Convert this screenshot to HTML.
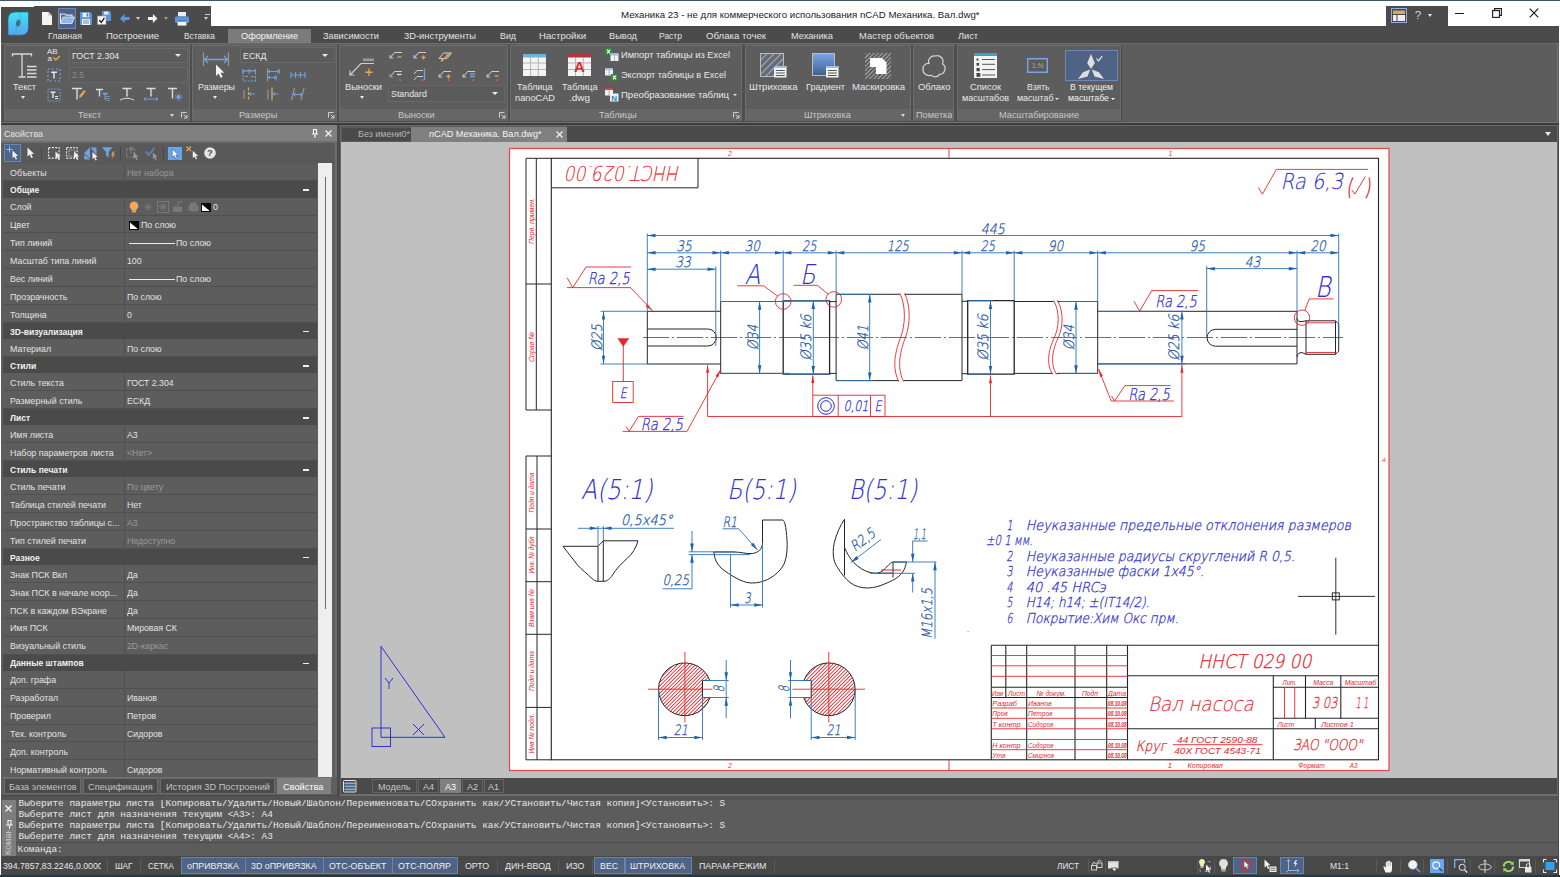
<!DOCTYPE html>
<html lang="ru"><head><meta charset="utf-8"><title>nanoCAD Механика</title>
<style>
html,body{margin:0;padding:0;background:#454545;}
body{width:1560px;height:877px;position:relative;overflow:hidden;font-family:"Liberation Sans",sans-serif;}
.b{position:absolute;box-sizing:border-box;}
.t{position:absolute;white-space:nowrap;transform-origin:0 50%;}
svg{overflow:visible;}
</style></head>
<body>
<div class="b" style="left:0px;top:0px;width:1560px;height:877px;background:#ffffff;"></div>
<div class="b" style="left:0px;top:0px;width:1560px;height:1px;background:#3d5868;"></div>
<div class="b" style="left:1px;top:26px;width:1558px;height:849px;background:#4b4b4b;"></div>
<div class="b" style="left:0px;top:875px;width:1560px;height:2px;background:#233a44;"></div>
<div class="b" style="left:1px;top:7px;width:34px;height:19px;background:#4b4b4b;"></div>
<div class="b" style="left:34px;top:6px;width:177px;height:20px;background:#4b4b4b;"></div>
<svg class="b" style="left:42px;top:12px" width="10" height="13" viewBox="0 0 10 13"><path d="M0 0H6.5L10 3.5V13H0Z" fill="#f4f4f4"/><path d="M6.5 0V3.5H10" fill="#bdbdbd"/></svg>
<div class="b" style="left:58px;top:8px;width:18px;height:20.5px;background:#4f6384;box-shadow:0 0 0 1px #6a89ba inset;"></div>
<svg class="b" style="left:60px;top:13px" width="15" height="11" viewBox="0 0 15 11"><path d="M0.5 10.5V1H5L6 2.2H12V4" fill="none" stroke="#dfe9f7" stroke-width="1.2"/><path d="M0.5 10.5L3 4H14.5L12 10.5Z" fill="#8fb7ea" stroke="#e8f0fb" stroke-width="0.8"/></svg>
<svg class="b" style="left:80px;top:12px" width="12" height="13" viewBox="0 0 12 13"><path d="M0 0H10L12 2V13H0Z" fill="#5c97dc"/><rect x="2.5" y="0.8" width="6.5" height="4.4" fill="#eaf1fb"/><rect x="6.6" y="1.4" width="1.6" height="3.2" fill="#4a7cc0"/><rect x="2" y="7.2" width="8" height="5.8" fill="#f2f2f2"/><path d="M3 9H9M3 11H9" stroke="#6b6b6b" stroke-width="0.8"/></svg>
<svg class="b" style="left:97px;top:11px" width="14" height="14" viewBox="0 0 14 14"><path d="M5 0H12.5L14 1.5V10H5Z" fill="#5c97dc"/><rect x="7" y="0.6" width="4.5" height="3" fill="#dfeaf8"/><rect x="0.5" y="5" width="8.5" height="8.5" fill="#f6f6f6" stroke="#9a9a9a" stroke-width="0.6"/><path d="M2.3 9.2L4.3 11.3L7.4 6.8" fill="none" stroke="#222" stroke-width="1.4"/></svg>
<svg class="b" style="left:120px;top:14px" width="10" height="9" viewBox="0 0 10 9"><path d="M0 4.5L4.6 0V2.9H9.5V6.1H4.6V9Z" fill="#5c97dc"/></svg>
<div class="b" style="left:135.9px;top:17.2px;border:2.6px solid transparent;border-top:3.1px solid #cfcfcf;border-bottom:0"></div>
<svg class="b" style="left:148px;top:14px" width="10" height="9" viewBox="0 0 10 9"><path d="M9.5 4.5L4.9 0V2.9H0V6.1H4.9V9Z" fill="#f4f4f4"/></svg>
<div class="b" style="left:163.9px;top:17.2px;border:2.6px solid transparent;border-top:3.1px solid #9a9a9a;border-bottom:0"></div>
<svg class="b" style="left:174.5px;top:11.5px" width="14" height="14" viewBox="0 0 14 14"><rect x="3" y="0" width="8" height="4.5" fill="#e8eef6"/><rect x="0" y="4.5" width="14" height="6.2" rx="1" fill="#5c97dc"/><rect x="2.6" y="9" width="8.8" height="4.6" fill="#f4f4f4"/><rect x="2.6" y="8.6" width="8.8" height="1" fill="#335f99"/></svg>
<div class="b" style="left:204.5px;top:13.5px;width:5px;height:1px;background:#cfcfcf;"></div>
<div class="b" style="left:204.4px;top:16.7px;border:2.6px solid transparent;border-top:3.1px solid #cfcfcf;border-bottom:0"></div>
<div class="t" style="left:621.0px;top:8.2px;font-size:9.7px;line-height:13.7px;color:#1a1a1a;transform:scaleX(0.9993);">Механика 23 - не для коммерческого использования nCAD Механика. Вал.dwg*</div>
<div class="b" style="left:1386px;top:6px;width:62px;height:20px;background:#4b4b4b;"></div>
<svg class="b" style="left:1391px;top:8px" width="16" height="15" viewBox="0 0 16 15"><rect x="0.5" y="0.5" width="15" height="14" fill="#4a4a4a" stroke="#8fb0de" stroke-width="1"/><rect x="2" y="2.5" width="12" height="3.5" fill="#d7a66a"/><rect x="2" y="7" width="3.5" height="6" fill="#ededed"/><rect x="6.5" y="7" width="7.5" height="6" fill="#ededed"/></svg>
<div class="t" style="left:1414.8px;top:7.8px;font-size:11.5px;line-height:15.5px;color:#d8d8d8;">?</div>
<div class="b" style="left:1428.2px;top:14.1px;border:2.8px solid transparent;border-top:3.3px solid #e6e6e6;border-bottom:0"></div>
<div class="b" style="left:1455px;top:12.5px;width:9px;height:1.2px;background:#1a1a1a;"></div>
<svg class="b" style="left:1492px;top:8px" width="10" height="10" viewBox="0 0 10 10"><rect x="0.6" y="2.6" width="6.8" height="6.8" fill="none" stroke="#1a1a1a" stroke-width="1.1"/><path d="M2.6 2.6V0.6H9.4V7.4H7.4" fill="none" stroke="#1a1a1a" stroke-width="1.1"/></svg>
<svg class="b" style="left:1529px;top:8px" width="10" height="10" viewBox="0 0 10 10"><path d="M0.7 0.7L9.3 9.3M9.3 0.7L0.7 9.3" stroke="#1a1a1a" stroke-width="1.2"/></svg>
<div class="b" style="left:228px;top:28.5px;width:83px;height:14.5px;background:#7b7b7b;"></div>
<svg class="b" style="left:7.8px;top:12.3px" width="20.5" height="23.2" viewBox="0 0 20.5 23.2"><defs><linearGradient id="lg" x1="0" y1="0" x2="0" y2="1"><stop offset="0" stop-color="#3fe2f6"/><stop offset="1" stop-color="#58a6ea"/></linearGradient></defs><path d="M7.5 0H19.5Q20.5 0 20.5 1V15.5Q20.5 23.2 13 23.2H1Q0 23.2 0 22.2V7.5Q0 0 7.5 0Z" fill="url(#lg)" stroke="#1f5f86" stroke-width="0.6"/><ellipse cx="10.2" cy="11.2" rx="2.2" ry="3.5" transform="rotate(12 10.2 11.2)" fill="#3f6f82"/><path d="M8.3 12.5L8 23M12 9.5L12.3 0.5" stroke="#3a9fd0" stroke-width="0.7" fill="none"/></svg>
<div class="t" style="left:48.0px;top:28.8px;font-size:9.5px;line-height:13.5px;color:#e2e2e2;transform:scaleX(0.9403);">Главная</div>
<div class="t" style="left:106.0px;top:28.8px;font-size:9.5px;line-height:13.5px;color:#e2e2e2;transform:scaleX(1.0019);">Построение</div>
<div class="t" style="left:184.0px;top:28.8px;font-size:9.5px;line-height:13.5px;color:#e2e2e2;transform:scaleX(0.8779);">Вставка</div>
<div class="t" style="left:241.0px;top:28.8px;font-size:9.5px;line-height:13.5px;color:#f4f4f4;transform:scaleX(0.9666);">Оформление</div>
<div class="t" style="left:323.0px;top:28.8px;font-size:9.5px;line-height:13.5px;color:#e2e2e2;transform:scaleX(0.9713);">Зависимости</div>
<div class="t" style="left:404.0px;top:28.8px;font-size:9.5px;line-height:13.5px;color:#e2e2e2;transform:scaleX(0.9860);">3D-инструменты</div>
<div class="t" style="left:500.0px;top:28.8px;font-size:9.5px;line-height:13.5px;color:#e2e2e2;transform:scaleX(0.9310);">Вид</div>
<div class="t" style="left:539.0px;top:28.8px;font-size:9.5px;line-height:13.5px;color:#e2e2e2;transform:scaleX(1.0090);">Настройки</div>
<div class="t" style="left:609.0px;top:28.8px;font-size:9.5px;line-height:13.5px;color:#e2e2e2;transform:scaleX(0.9748);">Вывод</div>
<div class="t" style="left:659.0px;top:28.8px;font-size:9.5px;line-height:13.5px;color:#e2e2e2;transform:scaleX(0.8953);">Растр</div>
<div class="t" style="left:706.0px;top:28.8px;font-size:9.5px;line-height:13.5px;color:#e2e2e2;transform:scaleX(1.0131);">Облака точек</div>
<div class="t" style="left:791.0px;top:28.8px;font-size:9.5px;line-height:13.5px;color:#e2e2e2;transform:scaleX(0.9717);">Механика</div>
<div class="t" style="left:859.0px;top:28.8px;font-size:9.5px;line-height:13.5px;color:#e2e2e2;transform:scaleX(0.9872);">Мастер объектов</div>
<div class="t" style="left:958.0px;top:28.8px;font-size:9.5px;line-height:13.5px;color:#e2e2e2;transform:scaleX(0.9689);">Лист</div>
<div class="b" style="left:1px;top:43px;width:1558px;height:80px;background:#5d5d5d;"></div>
<div class="b" style="left:1px;top:43px;width:1558px;height:1px;background:#6c6c6c;"></div>
<div class="b" style="left:1px;top:122px;width:1558px;height:1px;background:#747474;"></div>
<div class="b" style="left:1px;top:123px;width:1558px;height:2px;background:#3c3c3c;"></div>
<div class="b" style="left:1557px;top:43px;width:1px;height:80px;background:#747474;"></div>
<div class="b" style="left:2px;top:44.5px;width:189px;height:77.5px;background:#4e4e4e;"></div>
<div class="b" style="left:4px;top:45px;width:186px;height:76px;background:#5d5d5d;box-shadow:0 0 0 1px #6c6c6c inset;"></div>
<div class="b" style="left:5px;top:109px;width:184px;height:11.5px;background:#666666;"></div>
<div class="t" style="left:78.4px;top:108.2px;font-size:9.5px;line-height:13.5px;color:#c6c6c6;transform:scaleX(0.9700);">Текст</div>
<div class="b" style="left:190px;top:44.5px;width:148px;height:77.5px;background:#4e4e4e;"></div>
<div class="b" style="left:192px;top:45px;width:145px;height:76px;background:#5d5d5d;box-shadow:0 0 0 1px #6c6c6c inset;"></div>
<div class="b" style="left:193px;top:109px;width:143px;height:11.5px;background:#666666;"></div>
<div class="t" style="left:238.9px;top:108.2px;font-size:9.5px;line-height:13.5px;color:#c6c6c6;transform:scaleX(0.9700);">Размеры</div>
<div class="b" style="left:337px;top:44.5px;width:172px;height:77.5px;background:#4e4e4e;"></div>
<div class="b" style="left:339px;top:45px;width:169px;height:76px;background:#5d5d5d;box-shadow:0 0 0 1px #6c6c6c inset;"></div>
<div class="b" style="left:340px;top:109px;width:167px;height:11.5px;background:#666666;"></div>
<div class="t" style="left:397.6px;top:108.2px;font-size:9.5px;line-height:13.5px;color:#c6c6c6;transform:scaleX(0.9700);">Выноски</div>
<div class="b" style="left:508px;top:44.5px;width:235px;height:77.5px;background:#4e4e4e;"></div>
<div class="b" style="left:510px;top:45px;width:232px;height:76px;background:#5d5d5d;box-shadow:0 0 0 1px #6c6c6c inset;"></div>
<div class="b" style="left:511px;top:109px;width:230px;height:11.5px;background:#666666;"></div>
<div class="t" style="left:599.2px;top:108.2px;font-size:9.5px;line-height:13.5px;color:#c6c6c6;transform:scaleX(0.9700);">Таблицы</div>
<div class="b" style="left:743px;top:44.5px;width:169px;height:77.5px;background:#4e4e4e;"></div>
<div class="b" style="left:745px;top:45px;width:166px;height:76px;background:#5d5d5d;box-shadow:0 0 0 1px #6c6c6c inset;"></div>
<div class="b" style="left:746px;top:109px;width:164px;height:11.5px;background:#666666;"></div>
<div class="t" style="left:803.6px;top:108.2px;font-size:9.5px;line-height:13.5px;color:#c6c6c6;transform:scaleX(0.9700);">Штриховка</div>
<div class="b" style="left:911px;top:44.5px;width:44px;height:77.5px;background:#4e4e4e;"></div>
<div class="b" style="left:913px;top:45px;width:41px;height:76px;background:#5d5d5d;box-shadow:0 0 0 1px #6c6c6c inset;"></div>
<div class="b" style="left:914px;top:109px;width:39px;height:11.5px;background:#666666;"></div>
<div class="t" style="left:915.8px;top:108.2px;font-size:9.5px;line-height:13.5px;color:#c6c6c6;transform:scaleX(0.9700);">Пометка</div>
<div class="b" style="left:955px;top:44.5px;width:167px;height:77.5px;background:#4e4e4e;"></div>
<div class="b" style="left:957px;top:45px;width:164px;height:76px;background:#5d5d5d;box-shadow:0 0 0 1px #6c6c6c inset;"></div>
<div class="b" style="left:958px;top:109px;width:162px;height:11.5px;background:#666666;"></div>
<div class="t" style="left:998.9px;top:108.2px;font-size:9.5px;line-height:13.5px;color:#c6c6c6;transform:scaleX(0.9700);">Масштабирование</div>
<svg class="b" style="left:181px;top:112px" width="7" height="7" viewBox="0 0 7 7"><path d="M0.5 5.5V0.5H5.5" fill="none" stroke="#d0d0d0" stroke-width="1"/><path d="M2.5 2.5L6 6M6 3V6H3" fill="none" stroke="#d0d0d0" stroke-width="1"/></svg>
<svg class="b" style="left:328px;top:112px" width="7" height="7" viewBox="0 0 7 7"><path d="M0.5 5.5V0.5H5.5" fill="none" stroke="#d0d0d0" stroke-width="1"/><path d="M2.5 2.5L6 6M6 3V6H3" fill="none" stroke="#d0d0d0" stroke-width="1"/></svg>
<svg class="b" style="left:499px;top:112px" width="7" height="7" viewBox="0 0 7 7"><path d="M0.5 5.5V0.5H5.5" fill="none" stroke="#d0d0d0" stroke-width="1"/><path d="M2.5 2.5L6 6M6 3V6H3" fill="none" stroke="#d0d0d0" stroke-width="1"/></svg>
<svg class="b" style="left:733px;top:112px" width="7" height="7" viewBox="0 0 7 7"><path d="M0.5 5.5V0.5H5.5" fill="none" stroke="#d0d0d0" stroke-width="1"/><path d="M2.5 2.5L6 6M6 3V6H3" fill="none" stroke="#d0d0d0" stroke-width="1"/></svg>
<div class="b" style="left:170.4px;top:114px;border:2.6px solid transparent;border-top:3.1px solid #d6d6d6;border-bottom:0"></div>
<div class="b" style="left:901.4px;top:114px;border:2.6px solid transparent;border-top:3.1px solid #d6d6d6;border-bottom:0"></div>
<svg class="b" style="left:12px;top:53px" width="25" height="25" viewBox="0 0 25 25"><path d="M0.5 3.5V1H19.5V3.5M10 1V24M6.5 24H13.5" fill="none" stroke="#d8d8d8" stroke-width="1.3"/><path d="M15 13.5H24.5M15 17H24.5M15 20.5H24.5M15 24H24.5" stroke="#dcdcdc" stroke-width="1.3"/></svg>
<div class="t" style="left:12.5px;top:80.2px;font-size:9.5px;line-height:13.5px;color:#e8e8e8;transform:scaleX(0.9617);">Текст</div>
<div class="b" style="left:21.4px;top:96.2px;border:2.6px solid transparent;border-top:3.1px solid #e8e8e8;border-bottom:0"></div>
<svg class="b" style="left:47px;top:48px" width="14" height="14" viewBox="0 0 14 14"><text x="0" y="6.4" font-size="8" fill="#e6e6e6" font-family="Liberation Sans,sans-serif">AB</text><text x="0.5" y="12.8" font-size="8" fill="#e6e6e6" font-family="Liberation Sans,sans-serif">a</text><path d="M6.5 9.5L8.8 12L12.8 8" fill="none" stroke="#e8a352" stroke-width="1.5"/></svg>
<svg class="b" style="left:47px;top:68px" width="14" height="14" viewBox="0 0 14 14"><rect x="1" y="1" width="12" height="12" fill="none" stroke="#6ea3e0" stroke-width="1.2" stroke-dasharray="2 2"/><path d="M4 4.2H10M7 4.2V10.5" stroke="#e6e6e6" stroke-width="1.5" fill="none"/></svg>
<svg class="b" style="left:47px;top:88px" width="14" height="14" viewBox="0 0 14 14"><rect x="1" y="1" width="12" height="12" fill="none" stroke="#6ea3e0" stroke-width="1.1" stroke-dasharray="1.5 1.5"/><path d="M3.5 4.2H8.5M6 4.2V10" stroke="#e6e6e6" stroke-width="1.4" fill="none"/><path d="M8 8.5H11M8 10.5H11" stroke="#e6e6e6" stroke-width="1"/></svg>
<div class="b" style="left:69px;top:47.5px;width:118.5px;height:15.5px;background:#5b5b5b;box-shadow:0 0 0 1px #686868 inset;"></div>
<div class="t" style="left:72.0px;top:48.8px;font-size:9.5px;line-height:13.5px;color:#e8e8e8;transform:scaleX(0.9300);">ГОСТ 2.304</div>
<div class="b" style="left:174.6px;top:53.85px;border:3.4px solid transparent;border-top:3.9px solid #ececec;border-bottom:0"></div>
<div class="b" style="left:69px;top:66.7px;width:118.5px;height:16px;background:#5b5b5b;box-shadow:0 0 0 1px #686868 inset;"></div>
<div class="t" style="left:72.0px;top:68.2px;font-size:9.5px;line-height:13.5px;color:#8a8a8a;transform:scaleX(0.9300);">2.5</div>
<svg class="b" style="left:71px;top:87px" width="16" height="14" viewBox="0 0 16 14"><path d="M1 1.5H11M6 1.5V12.5" fill="none" stroke="#dcdcdc" stroke-width="1.4"/><path d="M8.5 8.5L13 3L14.8 4.6L10.3 10L8 10.8Z" fill="#e8a352"/></svg>
<svg class="b" style="left:95px;top:87px" width="16" height="14" viewBox="0 0 16 14"><path d="M1 2.5H8M4.5 2.5V9.5" fill="none" stroke="#dcdcdc" stroke-width="1.3"/><path d="M7.5 6.5H13M10.2 6.5V13" fill="none" stroke="#6ea3e0" stroke-width="1.3"/><path d="M11.5 9.5H14.5M11.5 11.5H14.5M11.5 13.3H14.5" stroke="#6ea3e0" stroke-width="0.9"/></svg>
<svg class="b" style="left:119px;top:87px" width="16" height="14" viewBox="0 0 16 14"><path d="M3.5 1.5H12.5M8 1.5V9.5" fill="none" stroke="#dcdcdc" stroke-width="1.4"/><path d="M1 13Q8 9.5 15 13" fill="none" stroke="#dcdcdc" stroke-width="1"/></svg>
<svg class="b" style="left:143px;top:87px" width="16" height="14" viewBox="0 0 16 14"><path d="M3.5 1.5H12.5M8 1.5V9.5" fill="none" stroke="#dcdcdc" stroke-width="1.4"/><path d="M1 12H15M3 10.3L1 12L3 13.7M13 10.3L15 12L13 13.7" fill="none" stroke="#6ea3e0" stroke-width="1"/></svg>
<svg class="b" style="left:167px;top:87px" width="16" height="14" viewBox="0 0 16 14"><path d="M1 1.5H10M5.5 1.5V11.5" fill="none" stroke="#dcdcdc" stroke-width="1.4"/><circle cx="11.5" cy="10" r="2.2" fill="#6ea3e0"/><circle cx="11.5" cy="10" r="3.4" fill="none" stroke="#6ea3e0" stroke-width="0.8" stroke-dasharray="1.4 1.3"/></svg>
<svg class="b" style="left:202px;top:52px" width="28" height="27" viewBox="0 0 28 27"><path d="M1.5 0.5V14M26.5 0.5V14" stroke="#9a9a9a" stroke-width="1.2"/><path d="M2.5 7.5H25.5M6 4L2.5 7.5L6 11M22 4L25.5 7.5L22 11" fill="none" stroke="#6ea3e0" stroke-width="1.3"/><path d="M14 12.5V24L16.7 21.4L18.6 25.8L20.6 24.9L18.7 20.7H22.3Z" fill="#f2f2f2"/></svg>
<div class="t" style="left:197.5px;top:80.2px;font-size:9.5px;line-height:13.5px;color:#e8e8e8;transform:scaleX(0.9372);">Размеры</div>
<div class="b" style="left:213.4px;top:96.2px;border:2.6px solid transparent;border-top:3.1px solid #e8e8e8;border-bottom:0"></div>
<div class="b" style="left:240px;top:46.7px;width:95px;height:16.5px;background:#5b5b5b;box-shadow:0 0 0 1px #686868 inset;"></div>
<div class="t" style="left:243.0px;top:48.5px;font-size:9.5px;line-height:13.5px;color:#e8e8e8;transform:scaleX(0.9300);">ЕСКД</div>
<div class="b" style="left:322.1px;top:53.55px;border:3.4px solid transparent;border-top:3.9px solid #ececec;border-bottom:0"></div>
<svg class="b" style="left:242px;top:68px" width="15" height="14" viewBox="0 0 15 14"><rect x="1" y="2.5" width="12.5" height="10.5" fill="none" stroke="#6ea3e0" stroke-width="1.1" stroke-dasharray="2.2 1.4"/><path d="M1 1V6M7.2 1V6M13.5 1V6M1 3H13.5" stroke="#6ea3e0" stroke-width="1" fill="none"/><path d="M3 8.5H6M9 8.5H12" stroke="#9a9a9a" stroke-width="1"/></svg>
<svg class="b" style="left:266px;top:68px" width="15" height="14" viewBox="0 0 15 14"><path d="M1.5 0.5V13.5" stroke="#9a9a9a" stroke-width="1.1"/><path d="M2 3.5H13M2 9.5H10M4 2L2 3.5L4 5M11 2L13 3.5L11 5M4 8L2 9.5L4 11M8 8L10 9.5L8 11M13.3 1V6M10.3 7V12.5" fill="none" stroke="#6ea3e0" stroke-width="1"/></svg>
<svg class="b" style="left:290px;top:68px" width="16" height="14" viewBox="0 0 16 14"><path d="M1 7H15M1 4V10M5.6 4V10M10.3 4V10M15 4V10" fill="none" stroke="#6ea3e0" stroke-width="1.1"/></svg>
<svg class="b" style="left:242px;top:87px" width="15" height="14" viewBox="0 0 15 14"><path d="M2 3V12" stroke="#9a9a9a" stroke-width="1.1"/><path d="M6.5 0.5V13.5" stroke="#e8a352" stroke-width="1.2" stroke-dasharray="3 1.5"/><path d="M7 7H13M9 5.2L7 7L9 8.8" fill="none" stroke="#6ea3e0" stroke-width="1"/></svg>
<svg class="b" style="left:266px;top:87px" width="15" height="14" viewBox="0 0 15 14"><path d="M2 2.5V12.5" stroke="#9a9a9a" stroke-width="1.1"/><path d="M6 0.5V13.5" stroke="#e8a352" stroke-width="1.3"/><path d="M7 7H12.5M9 5.2L7 7L9 8.8" fill="none" stroke="#6ea3e0" stroke-width="1"/></svg>
<svg class="b" style="left:290px;top:87px" width="16" height="14" viewBox="0 0 16 14"><path d="M4.5 1L1.5 13M14 1L11 13" stroke="#9a9a9a" stroke-width="1.1"/><path d="M3.5 7.5H12M5.5 5.8L3.5 7.5L5.5 9.2M10 5.8L12 7.5L10 9.2" fill="none" stroke="#6ea3e0" stroke-width="1"/></svg>
<svg class="b" style="left:349px;top:56px" width="27" height="22" viewBox="0 0 27 22"><path d="M1 19L12 7.5H25" fill="none" stroke="#cfcfcf" stroke-width="1.2"/><path d="M1 14.5V19H5.5" fill="none" stroke="#cfcfcf" stroke-width="1.2"/><rect x="14" y="2.5" width="11" height="2.6" fill="#9a9a9a"/><path d="M20 12.5V20M16.2 16.2H23.8" stroke="#e8a352" stroke-width="1.4"/></svg>
<div class="t" style="left:344.5px;top:80.2px;font-size:9.5px;line-height:13.5px;color:#e8e8e8;transform:scaleX(0.9761);">Выноски</div>
<div class="b" style="left:360.4px;top:96.2px;border:2.6px solid transparent;border-top:3.1px solid #e8e8e8;border-bottom:0"></div>
<svg class="b" style="left:389px;top:50px" width="14" height="13" viewBox="0 0 14 13"><path d="M1 8L5.5 2.5H13" fill="none" stroke="#cfcfcf" stroke-width="1"/><path d="M1 5V8H4" fill="none" stroke="#cfcfcf" stroke-width="1"/><path d="M8.5 7H12.5" stroke="#e8a352" stroke-width="1.3"/></svg>
<svg class="b" style="left:413px;top:50px" width="14" height="13" viewBox="0 0 14 13"><path d="M1 8L5.5 2.5H13" fill="none" stroke="#cfcfcf" stroke-width="1"/><path d="M1 5V8H4" fill="none" stroke="#cfcfcf" stroke-width="1"/><path d="M8.5 7.5H12.5M10.5 5.5V9.5" stroke="#e8a352" stroke-width="1.3"/></svg>
<svg class="b" style="left:438px;top:50px" width="15" height="12" viewBox="0 0 15 12"><path d="M1 8.5L5.5 3H13.5L9 8.5Z" fill="none" stroke="#cfcfcf" stroke-width="1"/><path d="M4 10.5L12 3" stroke="#e8a352" stroke-width="1.2"/><circle cx="4" cy="10.5" r="1.2" fill="#e8a352"/><circle cx="9.5" cy="5.5" r="1.2" fill="#e8a352"/></svg>
<svg class="b" style="left:389px;top:69px" width="14" height="13" viewBox="0 0 14 13"><path d="M1 8L5.5 2.5H13" fill="none" stroke="#cfcfcf" stroke-width="1"/><path d="M1 5V8H4" fill="none" stroke="#6ea3e0" stroke-width="1"/><path d="M8 5.5H12.5" stroke="#e0e0e0" stroke-width="1.3"/><rect x="10.3" y="10.3" width="1.7" height="1.7" fill="#e05a5a"/></svg>
<svg class="b" style="left:413px;top:68px" width="15" height="14" viewBox="0 0 15 14"><path d="M1 6L4 2.5H10M1 12L4 8.5H10" fill="none" stroke="#cfcfcf" stroke-width="1"/><path d="M11.5 0.5V12" stroke="#6ea3e0" stroke-width="1.3"/><rect x="8.5" y="11.5" width="1.8" height="1.8" fill="#e05a5a"/></svg>
<svg class="b" style="left:438px;top:69px" width="14" height="13" viewBox="0 0 14 13"><path d="M1 8L5.5 2.5H13" fill="none" stroke="#cfcfcf" stroke-width="1"/><path d="M1 5V8H4" fill="none" stroke="#cfcfcf" stroke-width="1"/><path d="M8.5 7.5H12.5M10.5 5.5V9.5" stroke="#e8a352" stroke-width="1.3"/><rect x="10.3" y="10.3" width="1.7" height="1.7" fill="#e05a5a"/></svg>
<svg class="b" style="left:462px;top:69px" width="14" height="13" viewBox="0 0 14 13"><path d="M1 8L5.5 2.5H13" fill="none" stroke="#cfcfcf" stroke-width="1"/><path d="M1 5V8H4" fill="none" stroke="#cfcfcf" stroke-width="1"/><path d="M8 5H13M8 7.5H13" stroke="#6ea3e0" stroke-width="1.4"/><rect x="10.3" y="10.3" width="1.7" height="1.7" fill="#e05a5a"/></svg>
<svg class="b" style="left:486px;top:69px" width="14" height="13" viewBox="0 0 14 13"><path d="M1 8L5.5 2.5H13" fill="none" stroke="#cfcfcf" stroke-width="1"/><path d="M1 5V8H4" fill="none" stroke="#cfcfcf" stroke-width="1"/><path d="M8.5 7H12.5" stroke="#e8a352" stroke-width="1.3"/><rect x="10.3" y="10.3" width="1.7" height="1.7" fill="#e05a5a"/></svg>
<div class="b" style="left:387.5px;top:85px;width:117.5px;height:17px;background:#5b5b5b;box-shadow:0 0 0 1px #686868 inset;"></div>
<div class="t" style="left:390.5px;top:87.0px;font-size:9.5px;line-height:13.5px;color:#e8e8e8;transform:scaleX(0.9300);">Standard</div>
<div class="b" style="left:492.1px;top:92.1px;border:3.4px solid transparent;border-top:3.9px solid #ececec;border-bottom:0"></div>
<svg class="b" style="left:523px;top:54px" width="23" height="22" viewBox="0 0 23 22"><rect x="0" y="0" width="23" height="22" fill="#f4f4f4"/><path d="M0 9H23M0 15.5H23M7.6 3.5V22M15.3 3.5V22" stroke="#b4b4b4" stroke-width="1"/><rect x="0" y="0" width="23" height="3.5" fill="#6fb2d6"/></svg>
<svg class="b" style="left:568px;top:54px" width="23" height="22" viewBox="0 0 23 22"><rect x="0" y="0" width="23" height="22" fill="#f4f4f4"/><path d="M0 9H23M0 15.5H23M7.6 3.5V22M15.3 3.5V22" stroke="#b4b4b4" stroke-width="1"/><rect x="0" y="0" width="23" height="3.5" fill="#b5343c"/><text x="11.5" y="18" text-anchor="middle" font-size="15" font-weight="bold" fill="#e3262e" font-family="Liberation Sans,sans-serif">A</text></svg>
<div class="t" style="left:517.2px;top:80.2px;font-size:9.5px;line-height:13.5px;color:#e8e8e8;transform:scaleX(0.9531);">Таблица</div>
<div class="t" style="left:515.0px;top:91.2px;font-size:9.5px;line-height:13.5px;color:#e8e8e8;transform:scaleX(0.9711);">nanoCAD</div>
<div class="t" style="left:562.2px;top:80.2px;font-size:9.5px;line-height:13.5px;color:#e8e8e8;transform:scaleX(0.9531);">Таблица</div>
<div class="t" style="left:569.0px;top:91.2px;font-size:9.5px;line-height:13.5px;color:#e8e8e8;transform:scaleX(1.0465);">.dwg</div>
<svg class="b" style="left:605px;top:48px" width="14" height="14" viewBox="0 0 14 14"><rect x="0" y="0" width="7" height="7" fill="#2f8a3c"/><path d="M2 1.7l3 3.6m0 -3.6l-3 3.6" stroke="#fff" stroke-width="1.1"/><rect x="5.5" y="5.5" width="8" height="7.5" fill="#f0f0f0"/><rect x="5.5" y="5.5" width="8" height="2" fill="#9cc0e8"/><path d="M9.5 7.5v5.5" stroke="#aaa" stroke-width="0.8"/></svg>
<svg class="b" style="left:605px;top:68px" width="14" height="14" viewBox="0 0 14 14"><rect x="0" y="0" width="8" height="7.5" fill="#f0f0f0"/><rect x="0" y="0" width="8" height="2" fill="#9cc0e8"/><path d="M4 2v5.5" stroke="#aaa" stroke-width="0.8"/><rect x="6" y="6" width="7" height="7" fill="#2f8a3c"/><path d="M8 7.7l3 3.6m0 -3.6l-3 3.6" stroke="#fff" stroke-width="1.1"/></svg>
<svg class="b" style="left:605px;top:87.5px" width="14" height="14" viewBox="0 0 14 14"><rect x="0" y="0" width="8" height="7.5" fill="#f0f0f0"/><rect x="0" y="0" width="8" height="2" fill="#c8474f"/><path d="M4 2v5.5" stroke="#aaa" stroke-width="0.8"/><rect x="5" y="5.5" width="8.5" height="8" fill="#e9f3fb"/><text x="9.2" y="12.6" text-anchor="middle" font-size="8" font-weight="bold" fill="#2f86c5" font-family="Liberation Sans,sans-serif">N</text></svg>
<div class="t" style="left:621.0px;top:48.2px;font-size:9.5px;line-height:13.5px;color:#e8e8e8;transform:scaleX(0.9760);">Импорт таблицы из Excel</div>
<div class="t" style="left:621.0px;top:68.2px;font-size:9.5px;line-height:13.5px;color:#e8e8e8;transform:scaleX(0.9585);">Экспорт таблицы в Excel</div>
<div class="t" style="left:621.0px;top:87.8px;font-size:9.5px;line-height:13.5px;color:#e8e8e8;transform:scaleX(1.0033);">Преобразование таблиц</div>
<div class="b" style="left:732.6px;top:93.8px;border:2.4px solid transparent;border-top:2.9px solid #e8e8e8;border-bottom:0"></div>
<svg class="b" style="left:760px;top:53px" width="27" height="25" viewBox="0 0 27 25"><defs><pattern id="h1" width="5" height="5" patternUnits="userSpaceOnUse" patternTransform="rotate(-45)"><rect width="5" height="1" fill="#8fb0de"/></pattern><clipPath id="c1"><rect x="1" y="1" width="22" height="22"/></clipPath></defs><rect x="1" y="1" width="22" height="22" fill="#6a6a6a"/><rect x="1" y="1" width="22" height="22" fill="url(#h1)"/><rect x="0.5" y="0.5" width="23" height="23" fill="none" stroke="#bdbdbd" stroke-width="1"/><rect x="14" y="13" width="12.5" height="11.5" fill="#f4f4f4"/><rect x="14" y="13" width="12.5" height="2" fill="#9cc0e8"/><path d="M15.8 17.5h9m-9 2.5h9m-9 2.5h9" stroke="#555" stroke-width="1"/></svg>
<svg class="b" style="left:812px;top:53px" width="27" height="25" viewBox="0 0 27 25"><defs><linearGradient id="g2" x1="0" y1="0" x2="0" y2="1"><stop offset="0" stop-color="#7aa7e6"/><stop offset="1" stop-color="#3d5f92"/></linearGradient></defs><rect x="0.5" y="0.5" width="22" height="22" fill="url(#g2)" stroke="#bdbdbd" stroke-width="1"/><rect x="14" y="13" width="12.5" height="11.5" fill="#f4f4f4"/><rect x="14" y="13" width="12.5" height="2" fill="#9cc0e8"/><path d="M15.8 17.5h9m-9 2.5h9m-9 2.5h9" stroke="#555" stroke-width="1"/></svg>
<svg class="b" style="left:865px;top:53px" width="27" height="26" viewBox="0 0 27 26"><defs><pattern id="h3" width="3" height="3" patternUnits="userSpaceOnUse" patternTransform="rotate(-45)"><rect width="3" height="1" fill="#a8a8a8"/></pattern></defs><rect x="0" y="0" width="26" height="26" fill="url(#h3)"/><path d="M5 5H17L21.5 9.5V21H11V14H5Z" fill="#ffffff"/></svg>
<div class="t" style="left:749.0px;top:80.2px;font-size:9.5px;line-height:13.5px;color:#e8e8e8;transform:scaleX(1.0048);">Штриховка</div>
<div class="t" style="left:806.0px;top:80.2px;font-size:9.5px;line-height:13.5px;color:#e8e8e8;transform:scaleX(0.9533);">Градиент</div>
<div class="t" style="left:851.5px;top:80.2px;font-size:9.5px;line-height:13.5px;color:#e8e8e8;transform:scaleX(1.0042);">Маскировка</div>
<svg class="b" style="left:920px;top:53px" width="27" height="26" viewBox="0 0 27 26"><path d="M9 10.5A5.6 5.6 0 0 1 15.2 3A5.8 5.8 0 0 1 22.5 10.8A5.8 5.8 0 0 1 19.6 21.4A5.6 5.6 0 0 1 11 22.2A6 6 0 0 1 3 16.2A5.2 5.2 0 0 1 9 10.5Z" fill="none" stroke="#d4d4d4" stroke-width="1.2"/></svg>
<div class="t" style="left:917.5px;top:80.2px;font-size:9.5px;line-height:13.5px;color:#e8e8e8;transform:scaleX(0.9916);">Облако</div>
<svg class="b" style="left:974px;top:53px" width="23" height="25" viewBox="0 0 23 25"><rect x="0" y="0" width="23" height="25" fill="#f4f4f4"/><rect x="0" y="0" width="23" height="3" fill="#3f9fc6"/><rect x="2.5" y="5.5" width="2" height="2" fill="#444"/><rect x="2.5" y="10" width="2.6" height="2.6" fill="#444"/><rect x="2.5" y="15" width="3.2" height="3.2" fill="#444"/><rect x="2.5" y="20" width="3.8" height="3.8" fill="#444"/><path d="M8 6.5H21M8 11.3H21M8 16.6H21M8 22H21" stroke="#555" stroke-width="1"/></svg>
<div class="t" style="left:970.0px;top:80.2px;font-size:9.5px;line-height:13.5px;color:#e8e8e8;transform:scaleX(0.9808);">Список</div>
<div class="t" style="left:962.0px;top:91.2px;font-size:9.5px;line-height:13.5px;color:#e8e8e8;transform:scaleX(0.9498);">масштабов</div>
<div class="b" style="left:1027px;top:58px;width:21px;height:15.3px;background:#5b5b5b;box-shadow:0 0 0 1.4px #77a6e6 inset;"></div>
<div class="t" style="left:1031.7px;top:60.0px;font-size:7.5px;line-height:11.5px;color:#a9a9a9;">1:N</div>
<div class="t" style="left:1026.8px;top:80.2px;font-size:9.5px;line-height:13.5px;color:#e8e8e8;transform:scaleX(0.8951);">Взять</div>
<div class="t" style="left:1016.8px;top:91.2px;font-size:9.5px;line-height:13.5px;color:#e8e8e8;transform:scaleX(0.9322);">масштаб</div>
<div class="b" style="left:1054.6px;top:97.8px;border:2.4px solid transparent;border-top:2.9px solid #e8e8e8;border-bottom:0"></div>
<div class="b" style="left:1065px;top:50px;width:53px;height:31px;background:#4f6384;box-shadow:0 0 0 1px #6a89ba inset;"></div>
<svg class="b" style="left:1078px;top:54px" width="28" height="25" viewBox="0 0 28 25"><path d="M13 0L16.8 9L13 15L9.2 9Z" fill="#dedede"/><path d="M12.2 15.6L9.5 22.5L0 25L5 18.2Z" fill="#dedede"/><path d="M13.8 15.6L16.5 22.5L26 25L21 18.2Z" fill="#dedede"/><path d="M18.5 4.5L20.5 6.8L24.2 2.2" fill="none" stroke="#f0f0f0" stroke-width="1.1"/></svg>
<div class="t" style="left:1070.0px;top:80.2px;font-size:9.5px;line-height:13.5px;color:#f4f4f4;transform:scaleX(0.9141);">В текущем</div>
<div class="t" style="left:1068.0px;top:91.2px;font-size:9.5px;line-height:13.5px;color:#f4f4f4;transform:scaleX(0.9248);">масштабе</div>
<div class="b" style="left:1111.1px;top:97.8px;border:2.4px solid transparent;border-top:2.9px solid #fff;border-bottom:0"></div>
<div class="b" style="left:1px;top:125px;width:336px;height:670px;background:#5e5e5e;"></div>
<div class="b" style="left:1px;top:125px;width:335.5px;height:16px;background:#808080;"></div>
<div class="b" style="left:1px;top:141px;width:335.5px;height:1.5px;background:#6e6e6e;"></div>
<div class="b" style="left:3px;top:142.5px;width:331px;height:21.5px;background:#595959;"></div>
<div class="b" style="left:334.5px;top:141px;width:2px;height:636px;background:#6c6c6c;"></div>
<div class="t" style="left:4.0px;top:126.6px;font-size:9.5px;line-height:13.5px;color:#e4e4e4;transform:scaleX(0.9349);">Свойства</div>
<svg class="b" style="left:311px;top:128.5px" width="8" height="9" viewBox="0 0 8 9"><path d="M2 0.5H6M2.5 0.5V5M5.5 0.5V5M0.8 5H7.2M4 5V8.8" fill="none" stroke="#f4f4f4" stroke-width="1.2"/></svg>
<svg class="b" style="left:324.5px;top:129.5px" width="7" height="7" viewBox="0 0 7 7"><path d="M0.5 0.5L6.5 6.5M6.5 0.5L0.5 6.5" stroke="#f4f4f4" stroke-width="1.3"/></svg>
<div class="b" style="left:4px;top:144px;width:17.3px;height:18px;background:#4f6384;box-shadow:0 0 0 1px #6a89ba inset;"></div>
<svg class="b" style="left:6px;top:146px" width="14" height="14" viewBox="0 0 14 14"><path d="M3.5 0.5V6.5M0.5 3.5H6.5" stroke="#8fc0ff" stroke-width="1"/><path transform="translate(6.5 4.5) scale(0.85)" d="M0 0V9L2.2 7L3.8 10.6L5.4 9.9L3.8 6.4H6.6Z" fill="#f2f2f2"/></svg>
<svg class="b" style="left:26px;top:146px" width="10" height="14" viewBox="0 0 10 14"><path transform="translate(1.5 1.5) scale(1)" d="M0 0V9L2.2 7L3.8 10.6L5.4 9.9L3.8 6.4H6.6Z" fill="#f2f2f2"/></svg>
<div class="b" style="left:41px;top:146.5px;width:1px;height:13px;background:#474747;"></div>
<svg class="b" style="left:48px;top:146.5px" width="13" height="13" viewBox="0 0 13 13"><rect x="0.6" y="0.6" width="10.5" height="10.5" fill="none" stroke="#ececec" stroke-width="1.1" stroke-dasharray="2 1.3"/><path transform="translate(7.5 4.5) scale(0.8)" d="M0 0V9L2.2 7L3.8 10.6L5.4 9.9L3.8 6.4H6.6Z" fill="#f2f2f2"/></svg>
<svg class="b" style="left:65.5px;top:146.5px" width="13" height="13" viewBox="0 0 13 13"><rect x="0.6" y="0.6" width="10.5" height="10.5" fill="none" stroke="#ececec" stroke-width="1.1" stroke-dasharray="2 1.3"/><rect x="3" y="3" width="6" height="6" fill="none" stroke="#c8c8c8" stroke-width="1" stroke-dasharray="1.2 1"/><path transform="translate(8 4.5) scale(0.8)" d="M0 0V9L2.2 7L3.8 10.6L5.4 9.9L3.8 6.4H6.6Z" fill="#f2f2f2"/></svg>
<svg class="b" style="left:83.5px;top:146.5px" width="13" height="13" viewBox="0 0 13 13"><path d="M0 6L6 0.5V11.5Z" fill="#6ea3e0"/><path d="M6.5 0.5H12.5V8Z" fill="#6ea3e0"/><path d="M0.3 12.5H6.5L0.3 7.5Z" fill="#6ea3e0"/><path transform="translate(8.5 5) scale(0.8)" d="M0 0V9L2.2 7L3.8 10.6L5.4 9.9L3.8 6.4H6.6Z" fill="#f2f2f2"/></svg>
<svg class="b" style="left:101.5px;top:146.5px" width="14" height="13" viewBox="0 0 14 13"><path d="M0 0.3H10.5L6.6 5V10.5L4 8.5V5Z" fill="#6ea3e0"/><path d="M11 4.5L9 8.2H10.8L9.6 12L13 7.3H11.3L12.6 4.5Z" fill="#e8a352"/></svg>
<div class="b" style="left:120px;top:146.5px;width:1px;height:13px;background:#474747;"></div>
<svg class="b" style="left:125.5px;top:146.5px" width="13" height="13" viewBox="0 0 13 13"><rect x="0.6" y="2" width="8" height="8" fill="none" stroke="#8e8e8e" stroke-width="1" stroke-dasharray="1.6 1.2"/><path d="M5 0V6M3.3 1.8L5 0L6.7 1.8" fill="none" stroke="#6f90b8" stroke-width="1"/><path transform="translate(7.5 5) scale(0.75)" d="M0 0V9L2.2 7L3.8 10.6L5.4 9.9L3.8 6.4H6.6Z" fill="#9a9a9a"/></svg>
<svg class="b" style="left:144.5px;top:147px" width="13" height="13" viewBox="0 0 13 13"><path d="M0.5 4.5L3.8 7.8L9.5 0.8" fill="none" stroke="#5d83b5" stroke-width="1.8"/><path transform="translate(7.8 5.5) scale(0.72)" d="M0 0V9L2.2 7L3.8 10.6L5.4 9.9L3.8 6.4H6.6Z" fill="#9a9a9a"/></svg>
<div class="b" style="left:162.5px;top:146.5px;width:1px;height:13px;background:#474747;"></div>
<div class="b" style="left:168px;top:146.5px;width:13.5px;height:13.5px;background:#6aa3ee;"></div>
<svg class="b" style="left:168px;top:146.5px" width="14" height="14" viewBox="0 0 14 14"><path transform="translate(4.2 2) scale(0.95)" d="M0 0V9L2.2 7L3.8 10.6L5.4 9.9L3.8 6.4H6.6Z" fill="#ffffff"/><path transform="translate(4.2 2) scale(0.95)" d="M0 0V9L2.2 7L3.8 10.6L5.4 9.9L3.8 6.4H6.6Z" fill="none" stroke="#3a5f97" stroke-width="0.7"/></svg>
<svg class="b" style="left:186px;top:146px" width="14" height="14" viewBox="0 0 14 14"><path d="M0.5 0.5L5 5M5 0.5L0.5 5" stroke="#e8a352" stroke-width="1.2"/><path transform="translate(6.8 4.8) scale(0.8)" d="M0 0V9L2.2 7L3.8 10.6L5.4 9.9L3.8 6.4H6.6Z" fill="#f2f2f2"/></svg>
<svg class="b" style="left:204px;top:147px" width="12" height="12" viewBox="0 0 12 12"><circle cx="6" cy="6" r="5.8" fill="#e6e6e6"/><text x="6" y="9.4" text-anchor="middle" font-size="9.5" font-weight="bold" fill="#4a4a4a" font-family="Liberation Sans,sans-serif">?</text></svg>
<div class="b" style="left:0;top:164px;width:340px;height:612.6px;overflow:hidden">
<div class="b" style="left:3.4px;top:0px;width:314.1px;height:17.4px;background:#5d5d5d;"></div>
<div class="b" style="left:3.4px;top:16.4px;width:314.1px;height:1px;background:#505050;"></div>
<div class="b" style="left:124.3px;top:0px;width:1px;height:17.4px;background:#505050;"></div>
<div class="t" style="left:9.5px;top:3.3px;font-size:9px;line-height:13px;color:#e2e2e2;transform:scaleX(0.9850);">Объекты</div>
<div class="t" style="left:127.3px;top:3.3px;font-size:9px;line-height:13px;color:#9a9a9a;transform:scaleX(0.9700);">Нет набора</div>
<div class="b" style="left:3.4px;top:17.4px;width:314.1px;height:16.3px;background:#4a4a4a;"></div>
<div class="t" style="left:9.5px;top:20.1px;font-size:9px;line-height:13px;color:#f0f0f0;transform:scaleX(0.9500);font-weight:bold;">Общие</div>
<div class="b" style="left:303px;top:25.4px;width:6px;height:1.6px;background:#f0f0f0;"></div>
<div class="b" style="left:3.4px;top:33.7px;width:314.1px;height:17.875px;background:#5d5d5d;"></div>
<div class="b" style="left:3.4px;top:50.575px;width:314.1px;height:1px;background:#505050;"></div>
<div class="b" style="left:124.3px;top:33.7px;width:1px;height:17.875px;background:#505050;"></div>
<div class="t" style="left:9.5px;top:37.2px;font-size:9px;line-height:13px;color:#e2e2e2;transform:scaleX(0.9850);">Слой</div>
<svg class="b" style="left:128.5px;top:37.2375px" width="10" height="12" viewBox="0 0 10 12"><path d="M5 0.5A4.3 4.3 0 0 1 7.6 8.2V9.2H2.4V8.2A4.3 4.3 0 0 1 5 0.5Z" fill="#f3a85c"/><rect x="2.9" y="9.2" width="4.2" height="2.3" fill="#c9a77c"/></svg>
<svg class="b" style="left:144px;top:39.2375px" width="8" height="8" viewBox="0 0 8 8"><path d="M4 0V8M0 4H8M1.2 1.2L6.8 6.8M6.8 1.2L1.2 6.8" stroke="#7c7c7c" stroke-width="0.9"/></svg>
<svg class="b" style="left:157px;top:37.2375px" width="12" height="12" viewBox="0 0 12 12"><rect x="0.5" y="0.5" width="11" height="11" fill="none" stroke="#787878" stroke-width="1"/><path d="M6 2V10M2 6H10M3.2 3.2L8.8 8.8M8.8 3.2L3.2 8.8" stroke="#7c7c7c" stroke-width="0.9"/></svg>
<svg class="b" style="left:173px;top:37.2375px" width="10" height="12" viewBox="0 0 10 12"><rect x="0" y="5.5" width="9" height="5.5" fill="#787878"/><path d="M5 5.5V3A2 2 0 0 1 9 2" fill="none" stroke="#787878" stroke-width="1.2"/></svg>
<svg class="b" style="left:187.5px;top:38.2375px" width="11" height="10" viewBox="0 0 11 10"><path d="M2.5 0.5H8.5L9.5 4H10.5V8.5Q5.5 10.5 0.5 8.5V4H1.5Z" fill="#787878"/></svg>
<svg class="b" style="left:201px;top:39.0375px" width="10" height="9" viewBox="0 0 10 9"><rect width="10" height="9" fill="#0a0a0a"/><path d="M1 1.5L8.8 8H1Z" fill="#ffffff"/></svg>
<div class="t" style="left:213.0px;top:37.3px;font-size:9px;line-height:13px;color:#e2e2e2;">0</div>
<div class="b" style="left:3.4px;top:51.575px;width:314.1px;height:17.875px;background:#5d5d5d;"></div>
<div class="b" style="left:3.4px;top:68.45px;width:314.1px;height:1px;background:#505050;"></div>
<div class="b" style="left:124.3px;top:51.575px;width:1px;height:17.875px;background:#505050;"></div>
<div class="t" style="left:9.5px;top:55.1px;font-size:9px;line-height:13px;color:#e2e2e2;transform:scaleX(0.9850);">Цвет</div>
<svg class="b" style="left:129px;top:56.6125px" width="10" height="9" viewBox="0 0 10 9"><rect width="10" height="9" fill="#0a0a0a"/><path d="M1 1.5L8.8 8H1Z" fill="#ffffff"/></svg>
<div class="t" style="left:141.0px;top:55.1px;font-size:9px;line-height:13px;color:#e2e2e2;transform:scaleX(0.9836);">По слою</div>
<div class="b" style="left:3.4px;top:69.45px;width:314.1px;height:17.875px;background:#5d5d5d;"></div>
<div class="b" style="left:3.4px;top:86.325px;width:314.1px;height:1px;background:#505050;"></div>
<div class="b" style="left:124.3px;top:69.45px;width:1px;height:17.875px;background:#505050;"></div>
<div class="t" style="left:9.5px;top:73.0px;font-size:9px;line-height:13px;color:#e2e2e2;transform:scaleX(0.9850);">Тип линий</div>
<div class="b" style="left:129px;top:78.7875px;width:45.5px;height:1px;background:#ececec;"></div>
<div class="t" style="left:175.5px;top:73.0px;font-size:9px;line-height:13px;color:#e2e2e2;transform:scaleX(0.9836);">По слою</div>
<div class="b" style="left:3.4px;top:87.325px;width:314.1px;height:17.875px;background:#5d5d5d;"></div>
<div class="b" style="left:3.4px;top:104.2px;width:314.1px;height:1px;background:#505050;"></div>
<div class="b" style="left:124.3px;top:87.325px;width:1px;height:17.875px;background:#505050;"></div>
<div class="t" style="left:9.5px;top:90.9px;font-size:9px;line-height:13px;color:#e2e2e2;transform:scaleX(0.9850);">Масштаб типа линий</div>
<div class="t" style="left:127.3px;top:90.9px;font-size:9px;line-height:13px;color:#e2e2e2;transform:scaleX(0.9700);">100</div>
<div class="b" style="left:3.4px;top:105.2px;width:314.1px;height:17.875px;background:#5d5d5d;"></div>
<div class="b" style="left:3.4px;top:122.075px;width:314.1px;height:1px;background:#505050;"></div>
<div class="b" style="left:124.3px;top:105.2px;width:1px;height:17.875px;background:#505050;"></div>
<div class="t" style="left:9.5px;top:108.7px;font-size:9px;line-height:13px;color:#e2e2e2;transform:scaleX(0.9850);">Вес линий</div>
<div class="b" style="left:129px;top:114.537px;width:45.5px;height:1px;background:#ececec;"></div>
<div class="t" style="left:175.5px;top:108.7px;font-size:9px;line-height:13px;color:#e2e2e2;transform:scaleX(0.9836);">По слою</div>
<div class="b" style="left:3.4px;top:123.075px;width:314.1px;height:17.875px;background:#5d5d5d;"></div>
<div class="b" style="left:3.4px;top:139.95px;width:314.1px;height:1px;background:#505050;"></div>
<div class="b" style="left:124.3px;top:123.075px;width:1px;height:17.875px;background:#505050;"></div>
<div class="t" style="left:9.5px;top:126.6px;font-size:9px;line-height:13px;color:#e2e2e2;transform:scaleX(0.9850);">Прозрачность</div>
<div class="t" style="left:127.3px;top:126.6px;font-size:9px;line-height:13px;color:#e2e2e2;transform:scaleX(0.9700);">По слою</div>
<div class="b" style="left:3.4px;top:140.95px;width:314.1px;height:17.875px;background:#5d5d5d;"></div>
<div class="b" style="left:3.4px;top:157.825px;width:314.1px;height:1px;background:#505050;"></div>
<div class="b" style="left:124.3px;top:140.95px;width:1px;height:17.875px;background:#505050;"></div>
<div class="t" style="left:9.5px;top:144.5px;font-size:9px;line-height:13px;color:#e2e2e2;transform:scaleX(0.9850);">Толщина</div>
<div class="t" style="left:127.3px;top:144.5px;font-size:9px;line-height:13px;color:#e2e2e2;transform:scaleX(0.9700);">0</div>
<div class="b" style="left:3.4px;top:158.825px;width:314.1px;height:16.3px;background:#4a4a4a;"></div>
<div class="t" style="left:9.5px;top:161.6px;font-size:9px;line-height:13px;color:#f0f0f0;transform:scaleX(0.9500);font-weight:bold;">3D-визуализация</div>
<div class="b" style="left:303px;top:166.825px;width:6px;height:1.6px;background:#f0f0f0;"></div>
<div class="b" style="left:3.4px;top:175.125px;width:314.1px;height:17.875px;background:#5d5d5d;"></div>
<div class="b" style="left:3.4px;top:192px;width:314.1px;height:1px;background:#505050;"></div>
<div class="b" style="left:124.3px;top:175.125px;width:1px;height:17.875px;background:#505050;"></div>
<div class="t" style="left:9.5px;top:178.7px;font-size:9px;line-height:13px;color:#e2e2e2;transform:scaleX(0.9850);">Материал</div>
<div class="t" style="left:127.3px;top:178.7px;font-size:9px;line-height:13px;color:#e2e2e2;transform:scaleX(0.9700);">По слою</div>
<div class="b" style="left:3.4px;top:193px;width:314.1px;height:16.3px;background:#4a4a4a;"></div>
<div class="t" style="left:9.5px;top:195.8px;font-size:9px;line-height:13px;color:#f0f0f0;transform:scaleX(0.9500);font-weight:bold;">Стили</div>
<div class="b" style="left:303px;top:201px;width:6px;height:1.6px;background:#f0f0f0;"></div>
<div class="b" style="left:3.4px;top:209.3px;width:314.1px;height:17.875px;background:#5d5d5d;"></div>
<div class="b" style="left:3.4px;top:226.175px;width:314.1px;height:1px;background:#505050;"></div>
<div class="b" style="left:124.3px;top:209.3px;width:1px;height:17.875px;background:#505050;"></div>
<div class="t" style="left:9.5px;top:212.8px;font-size:9px;line-height:13px;color:#e2e2e2;transform:scaleX(0.9850);">Стиль текста</div>
<div class="t" style="left:127.3px;top:212.8px;font-size:9px;line-height:13px;color:#e2e2e2;transform:scaleX(0.9700);">ГОСТ 2.304</div>
<div class="b" style="left:3.4px;top:227.175px;width:314.1px;height:17.875px;background:#5d5d5d;"></div>
<div class="b" style="left:3.4px;top:244.05px;width:314.1px;height:1px;background:#505050;"></div>
<div class="b" style="left:124.3px;top:227.175px;width:1px;height:17.875px;background:#505050;"></div>
<div class="t" style="left:9.5px;top:230.7px;font-size:9px;line-height:13px;color:#e2e2e2;transform:scaleX(0.9850);">Размерный стиль</div>
<div class="t" style="left:127.3px;top:230.7px;font-size:9px;line-height:13px;color:#e2e2e2;transform:scaleX(0.9700);">ЕСКД</div>
<div class="b" style="left:3.4px;top:245.05px;width:314.1px;height:16.3px;background:#4a4a4a;"></div>
<div class="t" style="left:9.5px;top:247.8px;font-size:9px;line-height:13px;color:#f0f0f0;transform:scaleX(0.9500);font-weight:bold;">Лист</div>
<div class="b" style="left:303px;top:253.05px;width:6px;height:1.6px;background:#f0f0f0;"></div>
<div class="b" style="left:3.4px;top:261.35px;width:314.1px;height:17.875px;background:#5d5d5d;"></div>
<div class="b" style="left:3.4px;top:278.225px;width:314.1px;height:1px;background:#505050;"></div>
<div class="b" style="left:124.3px;top:261.35px;width:1px;height:17.875px;background:#505050;"></div>
<div class="t" style="left:9.5px;top:264.9px;font-size:9px;line-height:13px;color:#e2e2e2;transform:scaleX(0.9850);">Имя листа</div>
<div class="t" style="left:127.3px;top:264.9px;font-size:9px;line-height:13px;color:#e2e2e2;transform:scaleX(0.9700);">А3</div>
<div class="b" style="left:3.4px;top:279.225px;width:314.1px;height:17.875px;background:#5d5d5d;"></div>
<div class="b" style="left:3.4px;top:296.1px;width:314.1px;height:1px;background:#505050;"></div>
<div class="b" style="left:124.3px;top:279.225px;width:1px;height:17.875px;background:#505050;"></div>
<div class="t" style="left:9.5px;top:282.8px;font-size:9px;line-height:13px;color:#e2e2e2;transform:scaleX(0.9850);">Набор параметров листа</div>
<div class="t" style="left:127.3px;top:282.8px;font-size:9px;line-height:13px;color:#9a9a9a;transform:scaleX(0.9700);">&lt;Нет&gt;</div>
<div class="b" style="left:3.4px;top:297.1px;width:314.1px;height:16.3px;background:#4a4a4a;"></div>
<div class="t" style="left:9.5px;top:299.9px;font-size:9px;line-height:13px;color:#f0f0f0;transform:scaleX(0.9500);font-weight:bold;">Стиль печати</div>
<div class="b" style="left:303px;top:305.1px;width:6px;height:1.6px;background:#f0f0f0;"></div>
<div class="b" style="left:3.4px;top:313.4px;width:314.1px;height:17.875px;background:#5d5d5d;"></div>
<div class="b" style="left:3.4px;top:330.275px;width:314.1px;height:1px;background:#505050;"></div>
<div class="b" style="left:124.3px;top:313.4px;width:1px;height:17.875px;background:#505050;"></div>
<div class="t" style="left:9.5px;top:316.9px;font-size:9px;line-height:13px;color:#e2e2e2;transform:scaleX(0.9850);">Стиль печати</div>
<div class="t" style="left:127.3px;top:316.9px;font-size:9px;line-height:13px;color:#9a9a9a;transform:scaleX(0.9700);">По цвету</div>
<div class="b" style="left:3.4px;top:331.275px;width:314.1px;height:17.875px;background:#5d5d5d;"></div>
<div class="b" style="left:3.4px;top:348.15px;width:314.1px;height:1px;background:#505050;"></div>
<div class="b" style="left:124.3px;top:331.275px;width:1px;height:17.875px;background:#505050;"></div>
<div class="t" style="left:9.5px;top:334.8px;font-size:9px;line-height:13px;color:#e2e2e2;transform:scaleX(0.9850);">Таблица стилей печати</div>
<div class="t" style="left:127.3px;top:334.8px;font-size:9px;line-height:13px;color:#e2e2e2;transform:scaleX(0.9700);">Нет</div>
<div class="b" style="left:3.4px;top:349.15px;width:314.1px;height:17.875px;background:#5d5d5d;"></div>
<div class="b" style="left:3.4px;top:366.025px;width:314.1px;height:1px;background:#505050;"></div>
<div class="b" style="left:124.3px;top:349.15px;width:1px;height:17.875px;background:#505050;"></div>
<div class="t" style="left:9.5px;top:352.7px;font-size:9px;line-height:13px;color:#e2e2e2;transform:scaleX(0.9850);">Пространство таблицы с...</div>
<div class="t" style="left:127.3px;top:352.7px;font-size:9px;line-height:13px;color:#9a9a9a;transform:scaleX(0.9700);">А3</div>
<div class="b" style="left:3.4px;top:367.025px;width:314.1px;height:17.875px;background:#5d5d5d;"></div>
<div class="b" style="left:3.4px;top:383.9px;width:314.1px;height:1px;background:#505050;"></div>
<div class="b" style="left:124.3px;top:367.025px;width:1px;height:17.875px;background:#505050;"></div>
<div class="t" style="left:9.5px;top:370.6px;font-size:9px;line-height:13px;color:#e2e2e2;transform:scaleX(0.9850);">Тип стилей печати</div>
<div class="t" style="left:127.3px;top:370.6px;font-size:9px;line-height:13px;color:#9a9a9a;transform:scaleX(0.9700);">Недоступно</div>
<div class="b" style="left:3.4px;top:384.9px;width:314.1px;height:16.3px;background:#4a4a4a;"></div>
<div class="t" style="left:9.5px;top:387.7px;font-size:9px;line-height:13px;color:#f0f0f0;transform:scaleX(0.9500);font-weight:bold;">Разное</div>
<div class="b" style="left:303px;top:392.9px;width:6px;height:1.6px;background:#f0f0f0;"></div>
<div class="b" style="left:3.4px;top:401.2px;width:314.1px;height:17.875px;background:#5d5d5d;"></div>
<div class="b" style="left:3.4px;top:418.075px;width:314.1px;height:1px;background:#505050;"></div>
<div class="b" style="left:124.3px;top:401.2px;width:1px;height:17.875px;background:#505050;"></div>
<div class="t" style="left:9.5px;top:404.7px;font-size:9px;line-height:13px;color:#e2e2e2;transform:scaleX(0.9850);">Знак ПСК Вкл</div>
<div class="t" style="left:127.3px;top:404.7px;font-size:9px;line-height:13px;color:#e2e2e2;transform:scaleX(0.9700);">Да</div>
<div class="b" style="left:3.4px;top:419.075px;width:314.1px;height:17.875px;background:#5d5d5d;"></div>
<div class="b" style="left:3.4px;top:435.95px;width:314.1px;height:1px;background:#505050;"></div>
<div class="b" style="left:124.3px;top:419.075px;width:1px;height:17.875px;background:#505050;"></div>
<div class="t" style="left:9.5px;top:422.6px;font-size:9px;line-height:13px;color:#e2e2e2;transform:scaleX(0.9850);">Знак ПСК в начале коор...</div>
<div class="t" style="left:127.3px;top:422.6px;font-size:9px;line-height:13px;color:#e2e2e2;transform:scaleX(0.9700);">Да</div>
<div class="b" style="left:3.4px;top:436.95px;width:314.1px;height:17.875px;background:#5d5d5d;"></div>
<div class="b" style="left:3.4px;top:453.825px;width:314.1px;height:1px;background:#505050;"></div>
<div class="b" style="left:124.3px;top:436.95px;width:1px;height:17.875px;background:#505050;"></div>
<div class="t" style="left:9.5px;top:440.5px;font-size:9px;line-height:13px;color:#e2e2e2;transform:scaleX(0.9850);">ПСК в каждом ВЭкране</div>
<div class="t" style="left:127.3px;top:440.5px;font-size:9px;line-height:13px;color:#e2e2e2;transform:scaleX(0.9700);">Да</div>
<div class="b" style="left:3.4px;top:454.825px;width:314.1px;height:17.875px;background:#5d5d5d;"></div>
<div class="b" style="left:3.4px;top:471.7px;width:314.1px;height:1px;background:#505050;"></div>
<div class="b" style="left:124.3px;top:454.825px;width:1px;height:17.875px;background:#505050;"></div>
<div class="t" style="left:9.5px;top:458.4px;font-size:9px;line-height:13px;color:#e2e2e2;transform:scaleX(0.9850);">Имя ПСК</div>
<div class="t" style="left:127.3px;top:458.4px;font-size:9px;line-height:13px;color:#e2e2e2;transform:scaleX(0.9700);">Мировая СК</div>
<div class="b" style="left:3.4px;top:472.7px;width:314.1px;height:17.875px;background:#5d5d5d;"></div>
<div class="b" style="left:3.4px;top:489.575px;width:314.1px;height:1px;background:#505050;"></div>
<div class="b" style="left:124.3px;top:472.7px;width:1px;height:17.875px;background:#505050;"></div>
<div class="t" style="left:9.5px;top:476.2px;font-size:9px;line-height:13px;color:#e2e2e2;transform:scaleX(0.9850);">Визуальный стиль</div>
<div class="t" style="left:127.3px;top:476.2px;font-size:9px;line-height:13px;color:#9a9a9a;transform:scaleX(0.9700);">2D-каркас</div>
<div class="b" style="left:3.4px;top:490.575px;width:314.1px;height:16.3px;background:#4a4a4a;"></div>
<div class="t" style="left:9.5px;top:493.3px;font-size:9px;line-height:13px;color:#f0f0f0;transform:scaleX(0.9500);font-weight:bold;">Данные штампов</div>
<div class="b" style="left:303px;top:498.575px;width:6px;height:1.6px;background:#f0f0f0;"></div>
<div class="b" style="left:3.4px;top:506.875px;width:314.1px;height:17.875px;background:#5d5d5d;"></div>
<div class="b" style="left:3.4px;top:523.75px;width:314.1px;height:1px;background:#505050;"></div>
<div class="b" style="left:124.3px;top:506.875px;width:1px;height:17.875px;background:#505050;"></div>
<div class="t" style="left:9.5px;top:510.4px;font-size:9px;line-height:13px;color:#e2e2e2;transform:scaleX(0.9850);">Доп. графа</div>
<div class="b" style="left:3.4px;top:524.75px;width:314.1px;height:17.875px;background:#5d5d5d;"></div>
<div class="b" style="left:3.4px;top:541.625px;width:314.1px;height:1px;background:#505050;"></div>
<div class="b" style="left:124.3px;top:524.75px;width:1px;height:17.875px;background:#505050;"></div>
<div class="t" style="left:9.5px;top:528.3px;font-size:9px;line-height:13px;color:#e2e2e2;transform:scaleX(0.9850);">Разработал</div>
<div class="t" style="left:127.3px;top:528.3px;font-size:9px;line-height:13px;color:#e2e2e2;transform:scaleX(0.9700);">Иванов</div>
<div class="b" style="left:3.4px;top:542.625px;width:314.1px;height:17.875px;background:#5d5d5d;"></div>
<div class="b" style="left:3.4px;top:559.5px;width:314.1px;height:1px;background:#505050;"></div>
<div class="b" style="left:124.3px;top:542.625px;width:1px;height:17.875px;background:#505050;"></div>
<div class="t" style="left:9.5px;top:546.2px;font-size:9px;line-height:13px;color:#e2e2e2;transform:scaleX(0.9850);">Проверил</div>
<div class="t" style="left:127.3px;top:546.2px;font-size:9px;line-height:13px;color:#e2e2e2;transform:scaleX(0.9700);">Петров</div>
<div class="b" style="left:3.4px;top:560.5px;width:314.1px;height:17.875px;background:#5d5d5d;"></div>
<div class="b" style="left:3.4px;top:577.375px;width:314.1px;height:1px;background:#505050;"></div>
<div class="b" style="left:124.3px;top:560.5px;width:1px;height:17.875px;background:#505050;"></div>
<div class="t" style="left:9.5px;top:564.0px;font-size:9px;line-height:13px;color:#e2e2e2;transform:scaleX(0.9850);">Тех. контроль</div>
<div class="t" style="left:127.3px;top:564.0px;font-size:9px;line-height:13px;color:#e2e2e2;transform:scaleX(0.9700);">Сидоров</div>
<div class="b" style="left:3.4px;top:578.375px;width:314.1px;height:17.875px;background:#5d5d5d;"></div>
<div class="b" style="left:3.4px;top:595.25px;width:314.1px;height:1px;background:#505050;"></div>
<div class="b" style="left:124.3px;top:578.375px;width:1px;height:17.875px;background:#505050;"></div>
<div class="t" style="left:9.5px;top:581.9px;font-size:9px;line-height:13px;color:#e2e2e2;transform:scaleX(0.9850);">Доп. контроль</div>
<div class="b" style="left:3.4px;top:596.25px;width:314.1px;height:17.875px;background:#5d5d5d;"></div>
<div class="b" style="left:3.4px;top:613.125px;width:314.1px;height:1px;background:#505050;"></div>
<div class="b" style="left:124.3px;top:596.25px;width:1px;height:17.875px;background:#505050;"></div>
<div class="t" style="left:9.5px;top:599.8px;font-size:9px;line-height:13px;color:#e2e2e2;transform:scaleX(0.9850);">Нормативный контроль</div>
<div class="t" style="left:127.3px;top:599.8px;font-size:9px;line-height:13px;color:#e2e2e2;transform:scaleX(0.9700);">Сидоров</div>
</div>
<div class="b" style="left:318px;top:163px;width:14.3px;height:614px;background:#eeeeee;"></div>
<div class="b" style="left:324.6px;top:177px;width:1.6px;height:432px;background:#6e6e6e;"></div>
<div class="b" style="left:3.4px;top:776.6px;width:331px;height:0.9px;background:#707070;"></div>
<div class="b" style="left:1px;top:777.5px;width:335.5px;height:17.5px;background:#5e5e5e;"></div>
<div class="b" style="left:3.5px;top:777.5px;width:77.5px;height:16.5px;background:#4a4a4a;box-shadow:0 0 0 1px #6c6c6c inset;"></div>
<div class="t" style="left:8.5px;top:779.5px;font-size:9.5px;line-height:13.5px;color:#c4c4c4;transform:scaleX(0.9535);">База элементов</div>
<div class="b" style="left:83px;top:777.5px;width:75.3px;height:16.5px;background:#4a4a4a;box-shadow:0 0 0 1px #6c6c6c inset;"></div>
<div class="t" style="left:88.3px;top:779.5px;font-size:9.5px;line-height:13.5px;color:#c4c4c4;transform:scaleX(0.9700);">Спецификация</div>
<div class="b" style="left:160.3px;top:777.5px;width:114.7px;height:16.5px;background:#4a4a4a;box-shadow:0 0 0 1px #6c6c6c inset;"></div>
<div class="t" style="left:165.7px;top:779.5px;font-size:9.5px;line-height:13.5px;color:#c4c4c4;transform:scaleX(0.9700);">История 3D Построений</div>
<div class="b" style="left:276.5px;top:777.5px;width:54px;height:16.5px;background:#808080;"></div>
<div class="t" style="left:283.3px;top:779.5px;font-size:9.5px;line-height:13.5px;color:#ffffff;transform:scaleX(0.9700);">Свойства</div>
<div class="b" style="left:336.5px;top:125px;width:4px;height:670px;background:#4b4b4b;"></div>
<div class="b" style="left:340px;top:125px;width:1218px;height:670px;background:#686868;"></div>
<div class="b" style="left:341.3px;top:125.8px;width:226px;height:16.2px;background:#5c5c5c;"></div>
<div class="b" style="left:567px;top:125.8px;width:990px;height:16.2px;background:#4a4a4a;"></div>
<div class="b" style="left:341.5px;top:128px;width:69px;height:12.5px;background:#4a4a4a;"></div>
<div class="t" style="left:357.5px;top:127.4px;font-size:9.5px;line-height:13.5px;color:#b4b4b4;transform:scaleX(0.9462);">Без имени0*</div>
<div class="b" style="left:410.6px;top:127px;width:156px;height:14.5px;background:#808080;"></div>
<div class="t" style="left:429.4px;top:127.4px;font-size:9.5px;line-height:13.5px;color:#f4f4f4;transform:scaleX(0.9582);">nCAD Механика. Вал.dwg*</div>
<svg class="b" style="left:556px;top:131px" width="7" height="7" viewBox="0 0 7 7"><path d="M0.5 0.5L6.5 6.5M6.5 0.5L0.5 6.5" stroke="#f0f0f0" stroke-width="1.2"/></svg>
<div class="b" style="left:1545.1px;top:131.5px;border:3.6px solid transparent;border-top:4.1px solid #e6e6e6;border-bottom:0"></div>
<div class="b" style="left:341px;top:777.5px;width:1216px;height:16.7px;background:#4a4a4a;"></div>
<div class="b" style="left:340px;top:794.2px;width:1218px;height:1.6px;background:#6e6e6e;"></div>
<svg class="b" style="left:343px;top:779.5px" width="13.5" height="12.5" viewBox="0 0 13.5 12.5"><rect x="0.5" y="0.5" width="12.5" height="11.5" rx="1" fill="#4a4a4a" stroke="#e4e4e4" stroke-width="1"/><path d="M1.5 3.3H12M1.5 6.3H12M1.5 9.3H12" stroke="#7fb0ea" stroke-width="1.7"/></svg>
<div class="b" style="left:372px;top:778.5px;width:44.7px;height:14px;background:#4a4a4a;box-shadow:0 0 0 1px #646464 inset;"></div>
<div class="t" style="left:378.2px;top:779.5px;font-size:9.5px;line-height:13.5px;color:#c9c9c9;transform:scaleX(0.9500);">Модель</div>
<div class="b" style="left:418px;top:778.5px;width:20.5px;height:14px;background:#4a4a4a;box-shadow:0 0 0 1px #646464 inset;"></div>
<div class="t" style="left:422.7px;top:779.5px;font-size:9.5px;line-height:13.5px;color:#c9c9c9;transform:scaleX(0.9500);">A4</div>
<div class="b" style="left:439.5px;top:778.5px;width:21.5px;height:14px;background:#808080;"></div>
<div class="t" style="left:444.7px;top:779.5px;font-size:9.5px;line-height:13.5px;color:#ffffff;transform:scaleX(0.9500);">A3</div>
<div class="b" style="left:462px;top:778.5px;width:20.5px;height:14px;background:#4a4a4a;box-shadow:0 0 0 1px #646464 inset;"></div>
<div class="t" style="left:466.7px;top:779.5px;font-size:9.5px;line-height:13.5px;color:#c9c9c9;transform:scaleX(0.9500);">A2</div>
<div class="b" style="left:483.5px;top:778.5px;width:20.5px;height:14px;background:#4a4a4a;box-shadow:0 0 0 1px #646464 inset;"></div>
<div class="t" style="left:488.2px;top:779.5px;font-size:9.5px;line-height:13.5px;color:#c9c9c9;transform:scaleX(0.9500);">A1</div>
<div class="b" style="left:1px;top:795.8px;width:1558px;height:4.5px;background:#535353;"></div>
<div class="b" style="left:1px;top:800px;width:1557px;height:56.3px;background:#5c5c5c;"></div>
<div class="b" style="left:1.5px;top:800px;width:14.5px;height:56.3px;background:#7e7e7e;"></div>
<svg class="b" style="left:5px;top:805px" width="7" height="7" viewBox="0 0 7 7"><path d="M0.5 0.5L6.5 6.5M6.5 0.5L0.5 6.5" stroke="#f4f4f4" stroke-width="1.3"/></svg>
<svg class="b" style="left:5.5px;top:820px" width="8" height="9" viewBox="0 0 8 9"><path d="M1.5 0.5H5.5M2 0.5V5M5 0.5V5M0.3 5H6.7M3.5 5V8.8" fill="none" stroke="#f4f4f4" stroke-width="1.1"/></svg>
<div class="b" style="left:2px;top:830px;width:13px;height:25px;overflow:hidden"><div class="t" style="left:1px;top:25px;font-size:9px;line-height:11px;color:#c8c8c8;transform:rotate(-90deg);transform-origin:0 0;">Команд</div></div>
<div class="b" style="left:16px;top:800.3px;width:1541px;height:41.5px;overflow:hidden">
<div class="t" style="left:2.5px;top:-2.6px;font-size:9.43px;line-height:11.25px;color:#e8e8e8;font-family:'Liberation Mono',monospace;">Выберите параметры листа [Копировать/Удалить/Новый/Шаблон/Переименовать/СОхранить как/УСтановить/Чистая копия]&lt;Установить&gt;: S</div>
<div class="t" style="left:2.5px;top:8.6px;font-size:9.43px;line-height:11.25px;color:#e8e8e8;font-family:'Liberation Mono',monospace;">Выберите лист для назначения текущим &lt;А3&gt;: А4</div>
<div class="t" style="left:2.5px;top:19.9px;font-size:9.43px;line-height:11.25px;color:#e8e8e8;font-family:'Liberation Mono',monospace;">Выберите параметры листа [Копировать/Удалить/Новый/Шаблон/Переименовать/СОхранить как/УСтановить/Чистая копия]&lt;Установить&gt;: S</div>
<div class="t" style="left:2.5px;top:31.1px;font-size:9.43px;line-height:11.25px;color:#e8e8e8;font-family:'Liberation Mono',monospace;">Выберите лист для назначения текущим &lt;А4&gt;: А3</div>
</div>
<div class="b" style="left:16px;top:841.8px;width:1541px;height:1px;background:#4c4c4c;"></div>
<div class="t" style="left:17.5px;top:842.9px;font-size:9.43px;line-height:13.43px;color:#e8e8e8;font-family:'Liberation Mono',monospace;">Команда:</div>
<div class="b" style="left:1px;top:856.3px;width:1558px;height:18.7px;background:#484848;"></div>
<div class="b" style="left:3px;top:857px;width:98.3px;height:17px;overflow:hidden"><div class="t" style="left:0.0px;top:1.8px;font-size:9.5px;line-height:13.5px;color:#e6e6e6;transform:scaleX(0.9197);">394.7857,83.2246,0.0000</div></div>
<div class="b" style="left:107px;top:859px;width:1px;height:14px;background:#5a5a5a;"></div>
<div class="b" style="left:140px;top:859px;width:1px;height:14px;background:#5a5a5a;"></div>
<div class="t" style="left:114.7px;top:859.0px;font-size:9.5px;line-height:13.5px;color:#e6e6e6;transform:scaleX(0.8718);">ШАГ</div>
<div class="t" style="left:148.0px;top:859.0px;font-size:9.5px;line-height:13.5px;color:#e6e6e6;transform:scaleX(0.8325);">СЕТКА</div>
<div class="b" style="left:181px;top:857px;width:64.6px;height:16.5px;background:#4f6384;box-shadow:0 0 0 1px #6484b4 inset;"></div>
<div class="t" style="left:187.1px;top:859.0px;font-size:9.5px;line-height:13.5px;color:#f0f0f0;transform:scaleX(0.9300);">оПРИВЯЗКА</div>
<div class="b" style="left:245px;top:857px;width:78.6px;height:16.5px;background:#4f6384;box-shadow:0 0 0 1px #6484b4 inset;"></div>
<div class="t" style="left:251.2px;top:859.0px;font-size:9.5px;line-height:13.5px;color:#f0f0f0;transform:scaleX(0.9300);">3D оПРИВЯЗКА</div>
<div class="b" style="left:323px;top:857px;width:69.6px;height:16.5px;background:#4f6384;box-shadow:0 0 0 1px #6484b4 inset;"></div>
<div class="t" style="left:328.8px;top:859.0px;font-size:9.5px;line-height:13.5px;color:#f0f0f0;transform:scaleX(0.9300);">ОТС-ОБЪЕКТ</div>
<div class="b" style="left:392px;top:857px;width:66.1px;height:16.5px;background:#4f6384;box-shadow:0 0 0 1px #6484b4 inset;"></div>
<div class="t" style="left:398.4px;top:859.0px;font-size:9.5px;line-height:13.5px;color:#f0f0f0;transform:scaleX(0.9300);">ОТС-ПОЛЯР</div>
<div class="t" style="left:465.1px;top:859.0px;font-size:9.5px;line-height:13.5px;color:#e6e6e6;transform:scaleX(0.9300);">ОРТО</div>
<div class="b" style="left:497px;top:859px;width:1px;height:14px;background:#5a5a5a;"></div>
<div class="t" style="left:504.6px;top:859.0px;font-size:9.5px;line-height:13.5px;color:#e6e6e6;transform:scaleX(0.9300);">ДИН-ВВОД</div>
<div class="b" style="left:558px;top:859px;width:1px;height:14px;background:#5a5a5a;"></div>
<div class="t" style="left:565.5px;top:859.0px;font-size:9.5px;line-height:13.5px;color:#e6e6e6;transform:scaleX(0.9300);">ИЗО</div>
<div class="b" style="left:591.5px;top:859px;width:1px;height:14px;background:#5a5a5a;"></div>
<div class="b" style="left:594px;top:857px;width:31.1px;height:16.5px;background:#4f6384;box-shadow:0 0 0 1px #6484b4 inset;"></div>
<div class="t" style="left:600.2px;top:859.0px;font-size:9.5px;line-height:13.5px;color:#f0f0f0;transform:scaleX(0.9300);">ВЕС</div>
<div class="b" style="left:624.5px;top:857px;width:67.6px;height:16.5px;background:#4f6384;box-shadow:0 0 0 1px #6484b4 inset;"></div>
<div class="t" style="left:630.4px;top:859.0px;font-size:9.5px;line-height:13.5px;color:#f0f0f0;transform:scaleX(0.9300);">ШТРИХОВКА</div>
<div class="t" style="left:698.8px;top:859.0px;font-size:9.5px;line-height:13.5px;color:#e6e6e6;transform:scaleX(0.9300);">ПАРАМ-РЕЖИМ</div>
<div class="b" style="left:773.5px;top:859px;width:1px;height:14px;background:#5a5a5a;"></div>
<div class="t" style="left:1056.7px;top:859.0px;font-size:9.5px;line-height:13.5px;color:#e6e6e6;transform:scaleX(0.8658);">ЛИСТ</div>
<div class="b" style="left:1087.5px;top:859px;width:1px;height:14px;background:#5a5a5a;"></div>
<svg class="b" style="left:1091px;top:860px" width="12" height="11" viewBox="0 0 12 11"><rect x="0.5" y="5.5" width="5" height="4.5" fill="none" stroke="#d0d0d0" stroke-width="1"/><path d="M1.5 5.5V4A1.5 1.5 0 0 1 4.5 4" fill="none" stroke="#d0d0d0" stroke-width="1"/><rect x="6" y="3" width="5" height="4.5" fill="none" stroke="#d0d0d0" stroke-width="1"/><path d="M7 3V1.8A1.5 1.5 0 0 1 10 1.8" fill="none" stroke="#d0d0d0" stroke-width="1"/></svg>
<div class="b" style="left:1105px;top:859px;width:1px;height:14px;background:#5a5a5a;"></div>
<svg class="b" style="left:1108px;top:860.5px" width="11" height="11" viewBox="0 0 11 11"><rect x="0" y="0" width="10.5" height="7.5" fill="#e4e4e4"/><rect x="0" y="0" width="10.5" height="1.5" fill="#bdbdbd"/><path d="M3.3 7L6.3 10.5L9.3 7Z" fill="#f4f4f4" stroke="#454545" stroke-width="0.8"/></svg>
<div class="b" style="left:1196.7px;top:859px;width:1px;height:14px;background:#5a5a5a;"></div>
<svg class="b" style="left:1198px;top:859px" width="14" height="14" viewBox="0 0 14 14"><rect x="2" y="2.5" width="10.5" height="10" fill="none" stroke="#8e8e8e" stroke-width="1" stroke-dasharray="4 3.5"/><path d="M4 0A3 3 0 0 1 5.8 5.4V7.2H2.2V5.4A3 3 0 0 1 4 0Z" fill="#f5efb0"/><rect x="2.5" y="7.2" width="3" height="1.6" fill="#c8c8c8"/><path transform="translate(8 5.5) scale(0.78)" d="M0 0V9L2.2 7L3.8 10.6L5.4 9.9L3.8 6.4H6.6Z" fill="#f2f2f2"/></svg>
<div class="b" style="left:1214px;top:859px;width:1px;height:14px;background:#5a5a5a;"></div>
<svg class="b" style="left:1218.5px;top:859px" width="9" height="14" viewBox="0 0 9 14"><path d="M4.5 0A4.4 4.4 0 0 1 7 8V10H2V8A4.4 4.4 0 0 1 4.5 0Z" fill="#e0e0e0"/><rect x="2.3" y="10" width="4.4" height="2.6" fill="#a8a8a8"/></svg>
<div class="b" style="left:1232.5px;top:857px;width:24px;height:16.5px;background:#4f6384;box-shadow:0 0 0 1px #6484b4 inset;"></div>
<svg class="b" style="left:1240px;top:859px" width="12" height="13" viewBox="0 0 12 13"><circle cx="6" cy="6.5" r="5" fill="none" stroke="#c8363c" stroke-width="1.4"/><path d="M2.5 10L9.5 3" stroke="#c8363c" stroke-width="1.3"/><path transform="translate(4.3 2.2) scale(0.7)" d="M0 0V9L2.2 7L3.8 10.6L5.4 9.9L3.8 6.4H6.6Z" fill="#f4f4f4"/></svg>
<svg class="b" style="left:1264px;top:859px" width="13" height="14" viewBox="0 0 13 14"><path transform="translate(0.5 0.5) scale(0.9)" d="M0 0V9L2.2 7L3.8 10.6L5.4 9.9L3.8 6.4H6.6Z" fill="#f2f2f2"/><rect x="5.5" y="7.5" width="7" height="5.5" fill="#f0f0f0"/><path d="M6.5 9.3H11.5M6.5 11.3H11.5" stroke="#555" stroke-width="0.8"/></svg>
<div class="b" style="left:1280px;top:857px;width:24px;height:16.5px;background:#4f6384;box-shadow:0 0 0 1px #6484b4 inset;"></div>
<svg class="b" style="left:1285px;top:859px" width="15" height="13" viewBox="0 0 15 13"><path d="M3.5 0.5V11.5H14M1.8 2.5L3.5 0.5L5.2 2.5M12.2 9.8L14 11.5L12.2 13.2M3.5 11.5L1 13" fill="none" stroke="#8fb7ea" stroke-width="1"/><path d="M10.5 1L8.5 5H10.2L9.2 8.5L12.5 4H10.8L12 1Z" fill="#e0e0e0"/></svg>
<div class="t" style="left:1329.7px;top:859.1px;font-size:9.5px;line-height:13.5px;color:#e0e0e0;transform:scaleX(0.8996);">М1:1</div>
<div class="b" style="left:1375.8px;top:859px;width:1px;height:14px;background:#5a5a5a;"></div>
<svg class="b" style="left:1383px;top:859.5px" width="12" height="13" viewBox="0 0 12 13"><path d="M2.5 12.5L0.4 7.2Q0.2 6 1.4 6.2L2.8 8V2.2Q3.4 1.2 4.2 2.2V0.9Q5 0 5.8 0.9V1.2Q6.6 0.4 7.4 1.3V2.2Q8.3 1.6 9 2.5V9Q9 11 7.8 12.5Z" fill="#f4f4f4"/><path d="M4.2 2.2V6M5.8 1V6M7.4 1.5V6" stroke="#8a8a8a" stroke-width="0.5"/></svg>
<div class="b" style="left:1399.5px;top:859px;width:1px;height:14px;background:#5a5a5a;"></div>
<svg class="b" style="left:1408px;top:860px" width="13" height="13" viewBox="0 0 13 13"><circle cx="4.8" cy="4.8" r="4.3" fill="#eef4fb" stroke="#d8d8d8" stroke-width="0.8"/><path d="M8 8L12 12" stroke="#5c97dc" stroke-width="1.8"/></svg>
<div class="b" style="left:1423px;top:859px;width:1px;height:14px;background:#5a5a5a;"></div>
<div class="b" style="left:1430px;top:858.5px;width:14px;height:14px;background:#6aa3ee;"></div>
<svg class="b" style="left:1432px;top:860.5px" width="11" height="11" viewBox="0 0 11 11"><circle cx="4.2" cy="4.2" r="3.4" fill="none" stroke="#f4f8ff" stroke-width="1.2"/><path d="M6.8 6.8L10.3 10.3" stroke="#2c4f86" stroke-width="1.6"/></svg>
<div class="b" style="left:1446.5px;top:859px;width:1px;height:14px;background:#5a5a5a;"></div>
<svg class="b" style="left:1454px;top:859px" width="14" height="14" viewBox="0 0 14 14"><path d="M0.7 9V0.7H10.5V4" fill="none" stroke="#7fb0ea" stroke-width="1.3"/><circle cx="8.2" cy="8.3" r="3.1" fill="none" stroke="#e4e4e4" stroke-width="1"/><path d="M10.5 10.8L13.3 13.5" stroke="#e4e4e4" stroke-width="1.3"/></svg>
<div class="b" style="left:1470px;top:859px;width:1px;height:14px;background:#5a5a5a;"></div>
<svg class="b" style="left:1477.5px;top:858.5px" width="14" height="15" viewBox="0 0 14 15"><ellipse cx="7" cy="8" rx="6.3" ry="3" fill="none" stroke="#cfcfcf" stroke-width="1"/><path d="M7 1V14M5.5 2.5L7 0.8L8.5 2.5" fill="none" stroke="#cfcfcf" stroke-width="1"/></svg>
<div class="b" style="left:1493.5px;top:859px;width:1px;height:14px;background:#5a5a5a;"></div>
<svg class="b" style="left:1501.5px;top:859.5px" width="13" height="13" viewBox="0 0 13 13"><path d="M1.8 6.5A4.7 4.7 0 0 1 10 3.3M11.2 6.5A4.7 4.7 0 0 1 3 9.7" fill="none" stroke="#9adb6c" stroke-width="2"/><path d="M8.2 4.6L11.8 5L11.4 1.2Z M4.8 8.4L1.2 8L1.6 11.8Z" fill="#9adb6c"/></svg>
<div class="b" style="left:1517.5px;top:859px;width:1px;height:14px;background:#5a5a5a;"></div>
<svg class="b" style="left:1519px;top:858.5px" width="13" height="14" viewBox="0 0 13 14"><rect x="0.5" y="0.5" width="10" height="8" fill="none" stroke="#d8d8d8" stroke-width="1"/><rect x="0.5" y="0.5" width="10" height="2" fill="#d8d8d8"/><rect x="6" y="8" width="6.5" height="5.5" fill="#e8e8e8"/><path d="M7.3 8V6.6A1.9 1.9 0 0 1 11.1 6.6V8" fill="none" stroke="#e8e8e8" stroke-width="1"/></svg>
<div class="b" style="left:1534.5px;top:859px;width:1px;height:14px;background:#5a5a5a;"></div>
<svg class="b" style="left:1542.5px;top:858.5px" width="14" height="14" viewBox="0 0 14 14"><rect x="2.5" y="3" width="9" height="8" fill="#35a0e8"/><path d="M0.5 3.5V0.5H3.5M10.5 0.5H13.5V3.5M13.5 10.5V13.5H10.5M3.5 13.5H0.5V10.5" fill="none" stroke="#e8e8e8" stroke-width="1.1"/></svg>
<svg class="b" style="left:341px;top:142px" width="1216" height="635.5" viewBox="341 142 1216 635.5">
<rect x="341" y="142" width="1216" height="636" fill="#c0c0c0"/>
<defs><pattern id="hat" width="2.55" height="2.55" patternUnits="userSpaceOnUse" patternTransform="rotate(-45)"><rect width="2.55" height="0.85" fill="#e8262c"/></pattern></defs>
<rect x="509.5" y="148.5" width="879.5" height="622" fill="#ffffff" stroke="#e0474c" stroke-width="1.2"/>
<path d="M381.0 646.3 L381.0 737.3 L445.0 737.3 L381.0 646.3" fill="none" stroke="#3030d8" stroke-width="1" />
<rect x="372" y="728" width="18.5" height="18.5" fill="none" stroke="#3030d8" stroke-width="1"/>
<path d="M385.0 678.0 L389.0 683.0 L393.0 678.0" fill="none" stroke="#3030d8" stroke-width="1" /><path d="M389.0 683.0 L389.0 689.0" fill="none" stroke="#3030d8" stroke-width="1" />
<path d="M413.0 724.0 L424.0 735.0" fill="none" stroke="#3030d8" stroke-width="1" /><path d="M424.0 724.0 L413.0 735.0" fill="none" stroke="#3030d8" stroke-width="1" />
<rect x="551.3" y="158.3" width="827.2" height="601.5" fill="none" stroke="#262626" stroke-width="1.1"/>
<path d="M551.3 158.3 L526.0 158.3 L526.0 410.0 L551.3 410.0" fill="none" stroke="#262626" stroke-width="1" /><path d="M536.3 158.3 L536.3 410.0" fill="none" stroke="#262626" stroke-width="1" /><path d="M526.0 284.0 L551.3 284.0" fill="none" stroke="#262626" stroke-width="1" />
<path d="M551.3 456.0 L526.0 456.0 L526.0 759.8 L551.3 759.8" fill="none" stroke="#262626" stroke-width="1" /><path d="M537.0 456.0 L537.0 759.8" fill="none" stroke="#262626" stroke-width="1" />
<path d="M526.0 529.0 L551.3 529.0" fill="none" stroke="#262626" stroke-width="1" />
<path d="M526.0 581.7 L551.3 581.7" fill="none" stroke="#262626" stroke-width="1" />
<path d="M526.0 634.3 L551.3 634.3" fill="none" stroke="#262626" stroke-width="1" />
<path d="M526.0 707.4 L551.3 707.4" fill="none" stroke="#262626" stroke-width="1" />
<text x="508.5" y="223.8" font-size="7.82" fill="#e8262c" text-anchor="start" font-family="'Liberation Sans',sans-serif" font-style="italic" textLength="46.0" lengthAdjust="spacingAndGlyphs" transform="rotate(-90 531.5 221.0)">Перв. примен.</text>
<text x="516.5" y="349.8" font-size="7.82" fill="#e8262c" text-anchor="start" font-family="'Liberation Sans',sans-serif" font-style="italic" textLength="30.0" lengthAdjust="spacingAndGlyphs" transform="rotate(-90 531.5 347.0)">Справ №</text>
<text x="511.5" y="495.3" font-size="7.82" fill="#e8262c" text-anchor="start" font-family="'Liberation Sans',sans-serif" font-style="italic" textLength="40.0" lengthAdjust="spacingAndGlyphs" transform="rotate(-90 531.5 492.5)">Подп и дата</text>
<text x="513.0" y="557.8" font-size="7.82" fill="#e8262c" text-anchor="start" font-family="'Liberation Sans',sans-serif" font-style="italic" textLength="37.0" lengthAdjust="spacingAndGlyphs" transform="rotate(-90 531.5 555.0)">Инв. № дубл</text>
<text x="512.5" y="610.8" font-size="7.82" fill="#e8262c" text-anchor="start" font-family="'Liberation Sans',sans-serif" font-style="italic" textLength="38.0" lengthAdjust="spacingAndGlyphs" transform="rotate(-90 531.5 608.0)">Взам инв №</text>
<text x="511.5" y="673.8" font-size="7.82" fill="#e8262c" text-anchor="start" font-family="'Liberation Sans',sans-serif" font-style="italic" textLength="40.0" lengthAdjust="spacingAndGlyphs" transform="rotate(-90 531.5 671.0)">Подп и дата</text>
<text x="511.5" y="736.3" font-size="7.82" fill="#e8262c" text-anchor="start" font-family="'Liberation Sans',sans-serif" font-style="italic" textLength="40.0" lengthAdjust="spacingAndGlyphs" transform="rotate(-90 531.5 733.5)">Инв № подл.</text>
<path d="M949.0 148.5 L949.0 158.3" fill="none" stroke="#e8262c" stroke-width="0.9" /><path d="M949.0 759.8 L949.0 770.5" fill="none" stroke="#e8262c" stroke-width="0.9" />
<text x="730.0" y="155.8" font-size="6.28" fill="#e8262c" text-anchor="middle" font-family="'Liberation Sans',sans-serif" font-style="italic">2</text><text x="1170.5" y="155.8" font-size="6.28" fill="#e8262c" text-anchor="middle" font-family="'Liberation Sans',sans-serif" font-style="italic">1</text><text x="730.0" y="767.8" font-size="6.28" fill="#e8262c" text-anchor="middle" font-family="'Liberation Sans',sans-serif" font-style="italic">2</text><text x="1384.0" y="461.6" font-size="5.87" fill="#e8262c" text-anchor="middle" font-family="'Liberation Sans',sans-serif" font-style="italic">A</text>
<path d="M698.0 158.3 L698.0 187.8 L551.3 187.8" fill="none" stroke="#262626" stroke-width="1" />
<text x="566.5" y="180.8" font-size="20.58" fill="#e8262c" text-anchor="start" font-family="'DejaVu Sans Light','Liberation Sans',sans-serif" font-weight="200" font-style="italic" stroke="#e8262c" stroke-width="0.1" textLength="114.0" lengthAdjust="spacingAndGlyphs" transform="rotate(180 623.5 173.3)">ННСТ.029.00</text>
<path d="M643.0 337.5 L1343.0 337.5" fill="none" stroke="#e8262c" stroke-width="0.9" stroke-dasharray="26 3 2 3"/>
<path d="M720.7 311.3 L647.3 311.3 L647.3 364.0 L720.7 364.0" fill="none" stroke="#262626" stroke-width="1" />
<path d="M647.3 329H707.8A8.5 8.5 0 0 1 707.8 346H647.3" fill="none" stroke="#262626" stroke-width="1" />
<path d="M783.2 301.5 L720.7 301.5 L720.7 373.4 L783.2 373.4" fill="none" stroke="#262626" stroke-width="1" />
<path d="M783.2 300.8H829.6V374.2H783.2Z" fill="none" stroke="#262626" stroke-width="1.3" />
<path d="M829.6 301.6 L836.1 301.6" fill="none" stroke="#262626" stroke-width="1" /><path d="M829.6 373.4 L836.1 373.4" fill="none" stroke="#262626" stroke-width="1" />
<path d="M899.8 294.3 L836.1 294.3 L836.1 380.6 L898.8 380.6" fill="none" stroke="#262626" stroke-width="1" />
<path d="M904.6 294.3 L962.0 294.3 L962.0 380.6 L903.6 380.6" fill="none" stroke="#262626" stroke-width="1" />
<path d="M899.8 293.3C906.3 306.4 905.3 325.4 900.6 337.5S891.3 366.8 898.8 381.6" fill="none" stroke="#e8262c" stroke-width="0.9" /><path d="M904.6 293.3C911.1 306.4 910.1 325.4 905.4 337.5S896.1 366.8 903.6 381.6" fill="none" stroke="#e8262c" stroke-width="0.9" />
<path d="M962.0 301.3 L967.7 301.3" fill="none" stroke="#262626" stroke-width="1" /><path d="M962.0 373.7 L967.7 373.7" fill="none" stroke="#262626" stroke-width="1" />
<path d="M967.7 300.7H1014.2V374.1H967.7Z" fill="none" stroke="#262626" stroke-width="1.3" />
<path d="M1014.2 301.5 L1053.6 301.5" fill="none" stroke="#262626" stroke-width="1" /><path d="M1014.2 373.4 L1052.6 373.4" fill="none" stroke="#262626" stroke-width="1" /><path d="M1057.5 301.5 L1097.7 301.5 L1097.7 373.4 L1056.5 373.4" fill="none" stroke="#262626" stroke-width="1" />
<path d="M1053.6 300.5C1060.1 311.6 1059.1 327.4 1054.4 337.4S1045.1 361.9 1052.6 374.4" fill="none" stroke="#e8262c" stroke-width="0.9" /><path d="M1057.5 300.5C1064.0 311.6 1063.0 327.4 1058.3 337.4S1049.0 361.9 1056.5 374.4" fill="none" stroke="#e8262c" stroke-width="0.9" />
<path d="M1097.7 311.3 L1297.0 311.3 L1297.0 363.9 L1097.7 363.9" fill="none" stroke="#262626" stroke-width="1" />
<path d="M1297 329.3H1215.5A8.45 8.45 0 0 0 1215.5 346.2H1297" fill="none" stroke="#262626" stroke-width="1" />
<path d="M1297 318.3Q1297.5 322.3 1302 321.6L1306 320.8M1297 356.8Q1297.5 352.4 1302 352.6L1306 354.3" fill="none" stroke="#262626" stroke-width="1" />
<path d="M1306 320.8H1335.5L1338.7 324V351.1L1335.5 354.3H1306Z" fill="none" stroke="#262626" stroke-width="1" /><path d="M1335.5 320.8 L1335.5 354.3" fill="none" stroke="#262626" stroke-width="1" />
<path d="M1306.0 322.8 L1335.5 322.8" fill="none" stroke="#e8262c" stroke-width="0.9" /><path d="M1306.0 352.5 L1335.5 352.5" fill="none" stroke="#e8262c" stroke-width="0.9" />
<path d="M647.3 233.5 L647.3 311.3" fill="none" stroke="#2a72b8" stroke-width="0.9" />
<path d="M720.7 250.5 L720.7 301.5" fill="none" stroke="#2a72b8" stroke-width="0.9" />
<path d="M783.2 250.5 L783.2 300.8" fill="none" stroke="#2a72b8" stroke-width="0.9" />
<path d="M836.1 250.5 L836.1 294.3" fill="none" stroke="#2a72b8" stroke-width="0.9" />
<path d="M962.0 250.5 L962.0 294.3" fill="none" stroke="#2a72b8" stroke-width="0.9" />
<path d="M1014.2 250.5 L1014.2 300.7" fill="none" stroke="#2a72b8" stroke-width="0.9" />
<path d="M1097.7 250.5 L1097.7 301.5" fill="none" stroke="#2a72b8" stroke-width="0.9" />
<path d="M1297.0 250.5 L1297.0 311.4" fill="none" stroke="#2a72b8" stroke-width="0.9" />
<path d="M1338.7 233.5 L1338.7 337.5" fill="none" stroke="#2a72b8" stroke-width="0.9" />
<path d="M647.3 235.5 L1338.7 235.5" fill="none" stroke="#2a72b8" stroke-width="0.9" /><path d="M647.3 235.5L655.5 233.8L655.5 237.2Z" fill="#1f62b0"/><path d="M1338.7 235.5L1330.5 237.2L1330.5 233.8Z" fill="#1f62b0"/><text x="980.8" y="233.6" font-size="14.40" fill="#1d55a4" text-anchor="start" font-family="'DejaVu Sans Light','Liberation Sans',sans-serif" font-weight="200" font-style="italic" stroke="#1d55a4" stroke-width="0.28" textLength="24.0" lengthAdjust="spacingAndGlyphs">445</text>
<path d="M647.3 252.8 L720.7 252.8" fill="none" stroke="#2a72b8" stroke-width="0.9" /><path d="M647.3 252.8L655.5 251.1L655.5 254.6Z" fill="#1f62b0"/><path d="M720.7 252.8L712.5 254.6L712.5 251.1Z" fill="#1f62b0"/><text x="676.2" y="250.6" font-size="14.40" fill="#1d55a4" text-anchor="start" font-family="'DejaVu Sans Light','Liberation Sans',sans-serif" font-weight="200" font-style="italic" stroke="#1d55a4" stroke-width="0.28" textLength="15.5" lengthAdjust="spacingAndGlyphs">35</text>
<path d="M720.7 252.8 L783.2 252.8" fill="none" stroke="#2a72b8" stroke-width="0.9" /><path d="M720.7 252.8L728.9 251.1L728.9 254.6Z" fill="#1f62b0"/><path d="M783.2 252.8L775.0 254.6L775.0 251.1Z" fill="#1f62b0"/><text x="744.5" y="250.6" font-size="14.40" fill="#1d55a4" text-anchor="start" font-family="'DejaVu Sans Light','Liberation Sans',sans-serif" font-weight="200" font-style="italic" stroke="#1d55a4" stroke-width="0.28" textLength="15.5" lengthAdjust="spacingAndGlyphs">30</text>
<path d="M783.2 252.8 L836.1 252.8" fill="none" stroke="#2a72b8" stroke-width="0.9" /><path d="M783.2 252.8L791.4 251.1L791.4 254.6Z" fill="#1f62b0"/><path d="M836.1 252.8L827.9 254.6L827.9 251.1Z" fill="#1f62b0"/><text x="802.1" y="250.6" font-size="14.40" fill="#1d55a4" text-anchor="start" font-family="'DejaVu Sans Light','Liberation Sans',sans-serif" font-weight="200" font-style="italic" stroke="#1d55a4" stroke-width="0.28" textLength="14.5" lengthAdjust="spacingAndGlyphs">25</text>
<path d="M836.1 252.8 L962.0 252.8" fill="none" stroke="#2a72b8" stroke-width="0.9" /><path d="M836.1 252.8L844.3 251.1L844.3 254.6Z" fill="#1f62b0"/><path d="M962.0 252.8L953.8 254.6L953.8 251.1Z" fill="#1f62b0"/><text x="886.8" y="250.6" font-size="14.40" fill="#1d55a4" text-anchor="start" font-family="'DejaVu Sans Light','Liberation Sans',sans-serif" font-weight="200" font-style="italic" stroke="#1d55a4" stroke-width="0.28" textLength="22.0" lengthAdjust="spacingAndGlyphs">125</text>
<path d="M962.0 252.8 L1014.2 252.8" fill="none" stroke="#2a72b8" stroke-width="0.9" /><path d="M962.0 252.8L970.2 251.1L970.2 254.6Z" fill="#1f62b0"/><path d="M1014.2 252.8L1006.0 254.6L1006.0 251.1Z" fill="#1f62b0"/><text x="980.4" y="250.6" font-size="14.40" fill="#1d55a4" text-anchor="start" font-family="'DejaVu Sans Light','Liberation Sans',sans-serif" font-weight="200" font-style="italic" stroke="#1d55a4" stroke-width="0.28" textLength="14.5" lengthAdjust="spacingAndGlyphs">25</text>
<path d="M1014.2 252.8 L1097.7 252.8" fill="none" stroke="#2a72b8" stroke-width="0.9" /><path d="M1014.2 252.8L1022.4 251.1L1022.4 254.6Z" fill="#1f62b0"/><path d="M1097.7 252.8L1089.5 254.6L1089.5 251.1Z" fill="#1f62b0"/><text x="1047.8" y="250.6" font-size="14.40" fill="#1d55a4" text-anchor="start" font-family="'DejaVu Sans Light','Liberation Sans',sans-serif" font-weight="200" font-style="italic" stroke="#1d55a4" stroke-width="0.28" textLength="15.5" lengthAdjust="spacingAndGlyphs">90</text>
<path d="M1097.7 252.8 L1297.0 252.8" fill="none" stroke="#2a72b8" stroke-width="0.9" /><path d="M1097.7 252.8L1105.9 251.1L1105.9 254.6Z" fill="#1f62b0"/><path d="M1297.0 252.8L1288.8 254.6L1288.8 251.1Z" fill="#1f62b0"/><text x="1189.5" y="250.6" font-size="14.40" fill="#1d55a4" text-anchor="start" font-family="'DejaVu Sans Light','Liberation Sans',sans-serif" font-weight="200" font-style="italic" stroke="#1d55a4" stroke-width="0.28" textLength="15.5" lengthAdjust="spacingAndGlyphs">95</text>
<path d="M1297.0 252.8 L1338.7 252.8" fill="none" stroke="#2a72b8" stroke-width="0.9" /><path d="M1297.0 252.8L1305.2 251.1L1305.2 254.6Z" fill="#1f62b0"/><path d="M1338.7 252.8L1330.5 254.6L1330.5 251.1Z" fill="#1f62b0"/><text x="1310.2" y="250.6" font-size="14.40" fill="#1d55a4" text-anchor="start" font-family="'DejaVu Sans Light','Liberation Sans',sans-serif" font-weight="200" font-style="italic" stroke="#1d55a4" stroke-width="0.28" textLength="15.5" lengthAdjust="spacingAndGlyphs">20</text>
<path d="M715.8 266.5 L715.8 346.0" fill="none" stroke="#2a72b8" stroke-width="0.9" /><path d="M647.3 269.2 L715.8 269.2" fill="none" stroke="#2a72b8" stroke-width="0.9" /><path d="M647.3 269.2L655.5 267.4L655.5 270.9Z" fill="#1f62b0"/><path d="M715.8 269.2L707.6 270.9L707.6 267.4Z" fill="#1f62b0"/><text x="675.2" y="267.2" font-size="14.40" fill="#1d55a4" text-anchor="start" font-family="'DejaVu Sans Light','Liberation Sans',sans-serif" font-weight="200" font-style="italic" stroke="#1d55a4" stroke-width="0.28" textLength="15.5" lengthAdjust="spacingAndGlyphs">33</text>
<path d="M1206.7 266.0 L1206.7 337.5" fill="none" stroke="#2a72b8" stroke-width="0.9" /><path d="M1206.7 268.6 L1297.0 268.6" fill="none" stroke="#2a72b8" stroke-width="0.9" /><path d="M1206.7 268.6L1214.9 266.9L1214.9 270.4Z" fill="#1f62b0"/><path d="M1297.0 268.6L1288.8 270.4L1288.8 266.9Z" fill="#1f62b0"/><text x="1244.7" y="267.2" font-size="14.40" fill="#1d55a4" text-anchor="start" font-family="'DejaVu Sans Light','Liberation Sans',sans-serif" font-weight="200" font-style="italic" stroke="#1d55a4" stroke-width="0.28" textLength="15.5" lengthAdjust="spacingAndGlyphs">43</text>
<path d="M600.5 311.3 L647.3 311.3" fill="none" stroke="#2a72b8" stroke-width="0.9" /><path d="M600.5 364.0 L647.3 364.0" fill="none" stroke="#2a72b8" stroke-width="0.9" /><path d="M603.5 311.3 L603.5 364.0" fill="none" stroke="#2a72b8" stroke-width="0.9" /><path d="M603.5 311.3L605.2 319.5L601.8 319.5Z" fill="#1f62b0"/><path d="M603.5 364.0L601.8 355.8L605.2 355.8Z" fill="#1f62b0"/><text x="583.5" y="342.9" font-size="14.40" fill="#1d55a4" text-anchor="start" font-family="'DejaVu Sans Light','Liberation Sans',sans-serif" font-weight="200" font-style="italic" stroke="#1d55a4" stroke-width="0.28" textLength="27.0" lengthAdjust="spacingAndGlyphs" transform="rotate(-90 597.0 337.6)">Ø25</text>
<path d="M720.7 301.5 L790.0 301.5" fill="none" stroke="#2a72b8" stroke-width="0.9" /><path d="M720.7 373.4 L790.0 373.4" fill="none" stroke="#2a72b8" stroke-width="0.9" /><path d="M759.6 301.5 L759.6 373.4" fill="none" stroke="#2a72b8" stroke-width="0.9" /><path d="M759.6 301.5L761.4 309.7L757.9 309.7Z" fill="#1f62b0"/><path d="M759.6 373.4L757.9 365.2L761.4 365.2Z" fill="#1f62b0"/><text x="740.5" y="342.7" font-size="14.40" fill="#1d55a4" text-anchor="start" font-family="'DejaVu Sans Light','Liberation Sans',sans-serif" font-weight="200" font-style="italic" stroke="#1d55a4" stroke-width="0.28" textLength="25.0" lengthAdjust="spacingAndGlyphs" transform="rotate(-90 753.0 337.4)">Ø34</text>
<path d="M783.2 300.8 L829.6 300.8" fill="none" stroke="#2a72b8" stroke-width="0.9" /><path d="M783.2 374.2 L829.6 374.2" fill="none" stroke="#2a72b8" stroke-width="0.9" /><path d="M813.3 300.8 L813.3 374.2" fill="none" stroke="#2a72b8" stroke-width="0.9" /><path d="M813.3 300.8L815.0 309.0L811.5 309.0Z" fill="#1f62b0"/><path d="M813.3 374.2L811.5 366.0L815.0 366.0Z" fill="#1f62b0"/><text x="782.5" y="342.8" font-size="14.40" fill="#1d55a4" text-anchor="start" font-family="'DejaVu Sans Light','Liberation Sans',sans-serif" font-weight="200" font-style="italic" stroke="#1d55a4" stroke-width="0.28" textLength="46.0" lengthAdjust="spacingAndGlyphs" transform="rotate(-90 805.5 337.5)">Ø35 k6</text>
<path d="M836.1 294.3 L873.0 294.3" fill="none" stroke="#2a72b8" stroke-width="0.9" /><path d="M836.1 380.6 L873.0 380.6" fill="none" stroke="#2a72b8" stroke-width="0.9" /><path d="M869.7 294.3 L869.7 380.6" fill="none" stroke="#2a72b8" stroke-width="0.9" /><path d="M869.7 294.3L871.5 302.5L868.0 302.5Z" fill="#1f62b0"/><path d="M869.7 380.6L868.0 372.4L871.5 372.4Z" fill="#1f62b0"/><text x="850.7" y="342.7" font-size="14.40" fill="#1d55a4" text-anchor="start" font-family="'DejaVu Sans Light','Liberation Sans',sans-serif" font-weight="200" font-style="italic" stroke="#1d55a4" stroke-width="0.28" textLength="25.0" lengthAdjust="spacingAndGlyphs" transform="rotate(-90 863.2 337.5)">Ø41</text>
<path d="M967.7 300.7 L994.0 300.7" fill="none" stroke="#2a72b8" stroke-width="0.9" /><path d="M967.7 374.1 L994.0 374.1" fill="none" stroke="#2a72b8" stroke-width="0.9" /><path d="M990.5 300.7 L990.5 374.1" fill="none" stroke="#2a72b8" stroke-width="0.9" /><path d="M990.5 300.7L992.2 308.9L988.8 308.9Z" fill="#1f62b0"/><path d="M990.5 374.1L988.8 365.9L992.2 365.9Z" fill="#1f62b0"/><text x="959.8" y="342.6" font-size="14.40" fill="#1d55a4" text-anchor="start" font-family="'DejaVu Sans Light','Liberation Sans',sans-serif" font-weight="200" font-style="italic" stroke="#1d55a4" stroke-width="0.28" textLength="46.0" lengthAdjust="spacingAndGlyphs" transform="rotate(-90 982.8 337.4)">Ø35 k6</text>
<path d="M1060.0 301.5 L1097.7 301.5" fill="none" stroke="#2a72b8" stroke-width="0.9" /><path d="M1060.0 373.4 L1097.7 373.4" fill="none" stroke="#2a72b8" stroke-width="0.9" /><path d="M1076.0 301.5 L1076.0 373.4" fill="none" stroke="#2a72b8" stroke-width="0.9" /><path d="M1076.0 301.5L1077.8 309.7L1074.2 309.7Z" fill="#1f62b0"/><path d="M1076.0 373.4L1074.2 365.2L1077.8 365.2Z" fill="#1f62b0"/><text x="1056.5" y="342.7" font-size="14.40" fill="#1d55a4" text-anchor="start" font-family="'DejaVu Sans Light','Liberation Sans',sans-serif" font-weight="200" font-style="italic" stroke="#1d55a4" stroke-width="0.28" textLength="25.0" lengthAdjust="spacingAndGlyphs" transform="rotate(-90 1069.0 337.4)">Ø34</text>
<path d="M1097.7 311.4 L1185.0 311.4" fill="none" stroke="#2a72b8" stroke-width="0.9" /><path d="M1097.7 363.9 L1185.0 363.9" fill="none" stroke="#2a72b8" stroke-width="0.9" /><path d="M1181.9 311.4 L1181.9 363.9" fill="none" stroke="#2a72b8" stroke-width="0.9" /><path d="M1181.9 311.4L1183.7 319.6L1180.2 319.6Z" fill="#1f62b0"/><path d="M1181.9 363.9L1180.2 355.7L1183.7 355.7Z" fill="#1f62b0"/><text x="1151.0" y="342.9" font-size="14.40" fill="#1d55a4" text-anchor="start" font-family="'DejaVu Sans Light','Liberation Sans',sans-serif" font-weight="200" font-style="italic" stroke="#1d55a4" stroke-width="0.28" textLength="46.0" lengthAdjust="spacingAndGlyphs" transform="rotate(-90 1174.0 337.6)">Ø25 k6</text>
<path d="M567.0 287.6 L630.5 287.6" fill="none" stroke="#e8262c" stroke-width="0.9" /><path d="M567.2 277.8 L572.8 287.6 L586.0 267.0 L631.0 267.0" fill="none" stroke="#e8262c" stroke-width="0.9" /><path d="M630.5 287.6 L652.6 310.7" fill="none" stroke="#e8262c" stroke-width="0.9" /><path d="M652.6 310.7L645.7 306.5L647.7 304.2Z" fill="#e8262c"/>
<text x="587.7" y="284.0" font-size="16.46" fill="#2e2ed0" text-anchor="start" font-family="'DejaVu Sans Light','Liberation Sans',sans-serif" font-weight="200" font-style="italic" stroke="#2e2ed0" stroke-width="0.28" textLength="42.0" lengthAdjust="spacingAndGlyphs">Ra 2,5</text>
<path d="M617.4 338.3H629.2L623.3 346.8Z" fill="#e8262c"/><path d="M623.3 346.0 L623.3 381.5" fill="none" stroke="#e8262c" stroke-width="0.9" />
<rect x="612.7" y="381.5" width="20.5" height="21" fill="none" stroke="#e8262c" stroke-width="0.9"/><text x="619.7" y="397.8" font-size="14.40" fill="#2e2ed0" text-anchor="start" font-family="'DejaVu Sans Light','Liberation Sans',sans-serif" font-weight="200" font-style="italic" stroke="#2e2ed0" stroke-width="0.28" textLength="7.0" lengthAdjust="spacingAndGlyphs">E</text>
<path d="M622.7 431.4 L687.0 431.4" fill="none" stroke="#e8262c" stroke-width="0.9" /><path d="M626.2 426.5 L629.2 431.4 L638.4 416.4 L683.5 416.4" fill="none" stroke="#e8262c" stroke-width="0.9" /><path d="M687.0 431.4 L720.7 369.7" fill="none" stroke="#e8262c" stroke-width="0.9" /><path d="M720.7 369.7L718.2 377.4L715.6 376.0Z" fill="#e8262c"/>
<text x="640.8" y="430.0" font-size="16.46" fill="#2e2ed0" text-anchor="start" font-family="'DejaVu Sans Light','Liberation Sans',sans-serif" font-weight="200" font-style="italic" stroke="#2e2ed0" stroke-width="0.28" textLength="42.0" lengthAdjust="spacingAndGlyphs">Ra 2,5</text>
<path d="M707.6 365.5 L707.6 416.5 L1181.9 416.5 L1181.9 364.8" fill="none" stroke="#e8262c" stroke-width="0.9" /><path d="M707.6 364.8L709.1 372.8L706.1 372.8Z" fill="#e8262c"/><path d="M1181.9 364.8L1183.4 372.8L1180.4 372.8Z" fill="#e8262c"/>
<rect x="812.8" y="395.2" width="72.2" height="21.3" fill="none" stroke="#e8262c" stroke-width="0.9"/><path d="M838.2 395.2 L838.2 416.5" fill="none" stroke="#e8262c" stroke-width="0.9" /><path d="M870.5 395.2 L870.5 416.5" fill="none" stroke="#e8262c" stroke-width="0.9" />
<path d="M812.8 375.5 L812.8 395.2" fill="none" stroke="#e8262c" stroke-width="0.9" /><path d="M812.8 375.0L814.3 383.0L811.3 383.0Z" fill="#e8262c"/><path d="M990.5 375.5 L990.5 416.5" fill="none" stroke="#e8262c" stroke-width="0.9" /><path d="M990.5 375.2L992.0 383.2L989.0 383.2Z" fill="#e8262c"/>
<circle cx="826" cy="406" r="8.3" fill="none" stroke="#2e2ed0" stroke-width="1"/><circle cx="826" cy="406" r="5.3" fill="none" stroke="#2e2ed0" stroke-width="1"/>
<text x="843.5" y="411.2" font-size="14.40" fill="#2e2ed0" text-anchor="start" font-family="'DejaVu Sans Light','Liberation Sans',sans-serif" font-weight="200" font-style="italic" stroke="#2e2ed0" stroke-width="0.28" textLength="25.0" lengthAdjust="spacingAndGlyphs">0,01</text><text x="874.5" y="411.2" font-size="14.40" fill="#2e2ed0" text-anchor="start" font-family="'DejaVu Sans Light','Liberation Sans',sans-serif" font-weight="200" font-style="italic" stroke="#2e2ed0" stroke-width="0.28" textLength="7.0" lengthAdjust="spacingAndGlyphs">E</text>
<text x="744.8" y="283.5" font-size="27.43" fill="#2e2ed0" text-anchor="start" font-family="'DejaVu Sans Light','Liberation Sans',sans-serif" font-weight="200" font-style="italic" stroke="#2e2ed0" stroke-width="0.1" textLength="15.5" lengthAdjust="spacingAndGlyphs">А</text><path d="M737.3 285.8 L763.5 285.8 L777.5 296.0" fill="none" stroke="#e8262c" stroke-width="0.9" /><circle cx="783.2" cy="301.5" r="7.8" fill="none" stroke="#e8262c" stroke-width="0.9"/>
<text x="800.0" y="283.5" font-size="27.43" fill="#2e2ed0" text-anchor="start" font-family="'DejaVu Sans Light','Liberation Sans',sans-serif" font-weight="200" font-style="italic" stroke="#2e2ed0" stroke-width="0.1" textLength="15.5" lengthAdjust="spacingAndGlyphs">Б</text><path d="M793.7 285.3 L817.3 285.3 L828.0 294.0" fill="none" stroke="#e8262c" stroke-width="0.9" /><circle cx="833.8" cy="299.4" r="7.8" fill="none" stroke="#e8262c" stroke-width="0.9"/>
<text x="1315.0" y="296.6" font-size="28.81" fill="#2e2ed0" text-anchor="start" font-family="'DejaVu Sans Light','Liberation Sans',sans-serif" font-weight="200" font-style="italic" stroke="#2e2ed0" stroke-width="0.1" textLength="15.5" lengthAdjust="spacingAndGlyphs">В</text><path d="M1333.7 298.9 L1309.2 298.9 L1304.8 310.4" fill="none" stroke="#e8262c" stroke-width="0.9" /><circle cx="1302" cy="317.7" r="7.7" fill="none" stroke="#e8262c" stroke-width="0.9"/>
<path d="M1134.0 301.3 L1139.7 311.2 L1151.7 290.6 L1198.2 290.6" fill="none" stroke="#e8262c" stroke-width="0.9" /><text x="1155.2" y="307.1" font-size="16.46" fill="#2e2ed0" text-anchor="start" font-family="'DejaVu Sans Light','Liberation Sans',sans-serif" font-weight="200" font-style="italic" stroke="#2e2ed0" stroke-width="0.28" textLength="41.5" lengthAdjust="spacingAndGlyphs">Ra 2,5</text>
<path d="M1098.6 369.0 L1111.2 401.0 L1173.9 401.0" fill="none" stroke="#e8262c" stroke-width="0.9" /><path d="M1098.6 369.0L1102.9 375.9L1100.1 377.0Z" fill="#e8262c"/><path d="M1111.5 396.0 L1114.6 401.0 L1124.8 385.6 L1170.5 385.6" fill="none" stroke="#e8262c" stroke-width="0.9" /><text x="1128.2" y="399.9" font-size="16.46" fill="#2e2ed0" text-anchor="start" font-family="'DejaVu Sans Light','Liberation Sans',sans-serif" font-weight="200" font-style="italic" stroke="#2e2ed0" stroke-width="0.28" textLength="41.5" lengthAdjust="spacingAndGlyphs">Ra 2,5</text>
<path d="M1258.5 187.6 L1262.4 194.2 L1276.4 169.4 L1368.0 169.4" fill="none" stroke="#e8262c" stroke-width="0.9" /><text x="1280.5" y="189.0" font-size="21.95" fill="#2e2ed0" text-anchor="start" font-family="'DejaVu Sans Light','Liberation Sans',sans-serif" font-weight="200" font-style="italic" stroke="#2e2ed0" stroke-width="0.1" textLength="62.5" lengthAdjust="spacingAndGlyphs">Ra 6,3</text>
<text x="1346.5" y="194.8" font-size="22.63" fill="#e8262c" text-anchor="start" font-family="'DejaVu Sans Light','Liberation Sans',sans-serif" font-weight="200" font-style="italic" stroke="#e8262c" stroke-width="0.6" textLength="5.5" lengthAdjust="spacingAndGlyphs">(</text><text x="1364.8" y="194.8" font-size="22.63" fill="#e8262c" text-anchor="start" font-family="'DejaVu Sans Light','Liberation Sans',sans-serif" font-weight="200" font-style="italic" stroke="#e8262c" stroke-width="0.6" textLength="5.5" lengthAdjust="spacingAndGlyphs">)</text><path d="M1351.8 189.9 L1354.9 194.0 L1365.3 176.5" fill="none" stroke="#e8262c" stroke-width="0.9" />
<text x="581.0" y="499.0" font-size="27.43" fill="#2e2ed0" text-anchor="start" font-family="'DejaVu Sans Light','Liberation Sans',sans-serif" font-weight="200" font-style="italic" stroke="#2e2ed0" stroke-width="0.1" textLength="71.5" lengthAdjust="spacingAndGlyphs">А(5:1)</text><text x="726.9" y="499.0" font-size="27.43" fill="#2e2ed0" text-anchor="start" font-family="'DejaVu Sans Light','Liberation Sans',sans-serif" font-weight="200" font-style="italic" stroke="#2e2ed0" stroke-width="0.1" textLength="69.0" lengthAdjust="spacingAndGlyphs">Б(5:1)</text><text x="848.8" y="499.0" font-size="27.43" fill="#2e2ed0" text-anchor="start" font-family="'DejaVu Sans Light','Liberation Sans',sans-serif" font-weight="200" font-style="italic" stroke="#2e2ed0" stroke-width="0.1" textLength="68.5" lengthAdjust="spacingAndGlyphs">В(5:1)</text>
<path d="M563 546.3H598L603.3 540.8H638C636 548 632.5 553.8 627 558.5C622.5 562.5 616 569 612.5 575C610 579 607 581.3 603.8 581.3H598C595.5 581.3 593.5 580 592 578.5C587 573.5 582 570 577.5 565Z" fill="none" stroke="#262626" stroke-width="1" />
<path d="M598.0 546.3 L598.0 581.3" fill="none" stroke="#262626" stroke-width="1" /><path d="M603.3 540.8 L603.3 581.3" fill="none" stroke="#262626" stroke-width="1" />
<path d="M598.0 526.0 L598.0 546.0" fill="none" stroke="#2a72b8" stroke-width="0.9" /><path d="M603.3 526.0 L603.3 540.8" fill="none" stroke="#2a72b8" stroke-width="0.9" /><path d="M578.0 528.3 L673.8 528.3" fill="none" stroke="#2a72b8" stroke-width="0.9" /><path d="M598.0 528.3L589.8 530.0L589.8 526.5Z" fill="#1f62b0"/><path d="M603.3 528.3L611.5 526.5L611.5 530.0Z" fill="#1f62b0"/>
<text x="621.0" y="525.2" font-size="14.40" fill="#1d55a4" text-anchor="start" font-family="'DejaVu Sans Light','Liberation Sans',sans-serif" font-weight="200" font-style="italic" stroke="#1d55a4" stroke-width="0.28" textLength="51.5" lengthAdjust="spacingAndGlyphs">0,5x45°</text>
<path d="M713.8 552C714.5 556.5 715 558.5 716 561C718.5 565.5 721 568.5 725 571C730 574.5 734.5 577.5 740 580C744.5 582 748 583 752.5 583C758 583 763 581.5 767.5 579.5C772.5 577 776.5 574 780 570C783.5 566 785 562.5 786 557.5C787.3 551.5 787.3 546 787 540C786.7 534 786 528.5 785 524C784.6 522.2 783.5 520 782.5 520H762.5V543C762.5 549 758.5 552.5 752.5 553.5C746 554.3 742 552 735 552Z" fill="none" stroke="#262626" stroke-width="1" />
<path d="M688.8 551.8 L735.0 551.8" fill="none" stroke="#2a72b8" stroke-width="0.9" /><path d="M688.8 554.6 L750.0 554.6" fill="none" stroke="#2a72b8" stroke-width="0.9" />
<path d="M692.0 531.0 L692.0 551.8" fill="none" stroke="#2a72b8" stroke-width="0.9" /><path d="M692.0 551.8L690.2 543.6L693.8 543.6Z" fill="#1f62b0"/><path d="M692.0 554.6 L692.0 588.8" fill="none" stroke="#2a72b8" stroke-width="0.9" /><path d="M692.0 554.6L693.8 562.8L690.2 562.8Z" fill="#1f62b0"/><path d="M662.5 588.8 L692.0 588.8" fill="none" stroke="#2a72b8" stroke-width="0.9" /><text x="662.5" y="585.2" font-size="14.40" fill="#1d55a4" text-anchor="start" font-family="'DejaVu Sans Light','Liberation Sans',sans-serif" font-weight="200" font-style="italic" stroke="#1d55a4" stroke-width="0.28" textLength="26.5" lengthAdjust="spacingAndGlyphs">0,25</text>
<text x="722.5" y="527.0" font-size="14.40" fill="#1d55a4" text-anchor="start" font-family="'DejaVu Sans Light','Liberation Sans',sans-serif" font-weight="200" font-style="italic" stroke="#1d55a4" stroke-width="0.28" textLength="14.5" lengthAdjust="spacingAndGlyphs">R1</text><path d="M722.5 528.8 L738.8 528.8 L757.5 550.0" fill="none" stroke="#2a72b8" stroke-width="0.9" /><path d="M757.5 550.0L750.8 545.0L753.4 542.7Z" fill="#1f62b0"/>
<path d="M730.5 554.6 L730.5 607.5" fill="none" stroke="#2a72b8" stroke-width="0.9" /><path d="M762.5 543.0 L762.5 607.5" fill="none" stroke="#2a72b8" stroke-width="0.9" /><path d="M730.5 605.0 L762.5 605.0" fill="none" stroke="#2a72b8" stroke-width="0.9" /><path d="M730.5 605.0L738.7 603.2L738.7 606.8Z" fill="#1f62b0"/><path d="M762.5 605.0L754.3 606.8L754.3 603.2Z" fill="#1f62b0"/><text x="744.2" y="602.5" font-size="14.40" fill="#1d55a4" text-anchor="start" font-family="'DejaVu Sans Light','Liberation Sans',sans-serif" font-weight="200" font-style="italic" stroke="#1d55a4" stroke-width="0.28" textLength="6.5" lengthAdjust="spacingAndGlyphs">3</text>
<path d="M844.5 519.3V575.5M844.5 519.3C840 526 837 533 835 540C833.5 545 833 550 833.3 555C833.7 560 835 564 837.5 567.5C841 573 845 578.5 850 582.5C855 586.3 861 588 867.5 588C874 588 880 586 885 583.8C890.5 581.5 895 579.5 898.8 576.3C902 573.5 904 570.5 905 567.5C905.8 565.5 906.3 563.5 906.3 562H893V577.5" fill="none" stroke="#262626" stroke-width="1" />
<path d="M844.5 547.5C847 553.5 850 558.5 853.8 562.5C858 567 864 571 870 572.5C872.5 573.1 875 573.2 877.5 573.2H893M877.5 573.2C881.5 572.5 884.5 569.5 887.5 566C889.5 563.8 891 562.5 893 562" fill="none" stroke="#262626" stroke-width="1" />
<path d="M881.0 570.0 L901.0 570.0" fill="none" stroke="#e8262c" stroke-width="1" />
<path d="M893.0 562.0 L936.5 562.0" fill="none" stroke="#2a72b8" stroke-width="0.9" /><path d="M870.0 573.3 L915.0 573.3" fill="none" stroke="#2a72b8" stroke-width="0.9" />
<path d="M881.0 539.5 L851.0 562.5" fill="none" stroke="#2a72b8" stroke-width="0.9" /><path d="M851.0 562.5L856.4 556.1L858.6 558.9Z" fill="#1f62b0"/><text x="849.0" y="544.8" font-size="14.40" fill="#1d55a4" text-anchor="start" font-family="'DejaVu Sans Light','Liberation Sans',sans-serif" font-weight="200" font-style="italic" stroke="#1d55a4" stroke-width="0.28" textLength="27.0" lengthAdjust="spacingAndGlyphs" transform="rotate(-37.5 862.5 539.5)">R2,5</text>
<text x="913.0" y="539.0" font-size="14.40" fill="#1d55a4" text-anchor="start" font-family="'DejaVu Sans Light','Liberation Sans',sans-serif" font-weight="200" font-style="italic" stroke="#1d55a4" stroke-width="0.28" textLength="13.0" lengthAdjust="spacingAndGlyphs">1,1</text><path d="M912.5 541.0 L927.5 541.0" fill="none" stroke="#2a72b8" stroke-width="0.9" /><path d="M912.7 541.0 L912.7 562.0" fill="none" stroke="#2a72b8" stroke-width="0.9" /><path d="M912.7 562.0L911.0 553.8L914.5 553.8Z" fill="#1f62b0"/><path d="M912.7 573.3 L912.7 592.5" fill="none" stroke="#2a72b8" stroke-width="0.9" /><path d="M912.7 573.3L914.5 581.5L911.0 581.5Z" fill="#1f62b0"/>
<path d="M935.0 562.0 L935.0 638.7" fill="none" stroke="#2a72b8" stroke-width="0.9" /><path d="M935.0 562.0L936.8 570.2L933.2 570.2Z" fill="#1f62b0"/><text x="901.0" y="618.8" font-size="14.40" fill="#1d55a4" text-anchor="start" font-family="'DejaVu Sans Light','Liberation Sans',sans-serif" font-weight="200" font-style="italic" stroke="#1d55a4" stroke-width="0.28" textLength="51.0" lengthAdjust="spacingAndGlyphs" transform="rotate(-90 926.5 613.5)">M16x1,5</text>
<path d="M709.8 680.5H702.5V697.5H710.0A26.4 26.4 0 1 1 709.8 680.5Z" fill="url(#hat)" stroke="#262626" stroke-width="1"/>
<path d="M648.0 689.2 L712.5 689.2" fill="none" stroke="#e8262c" stroke-width="0.9" /><path d="M684.9 652.0 L684.9 722.5" fill="none" stroke="#e8262c" stroke-width="0.9" />
<path d="M702.5 680.5 L728.7 680.5" fill="none" stroke="#2a72b8" stroke-width="0.9" /><path d="M702.5 697.5 L728.7 697.5" fill="none" stroke="#2a72b8" stroke-width="0.9" /><path d="M726.2 660.0 L726.2 718.3" fill="none" stroke="#2a72b8" stroke-width="0.9" /><path d="M726.2 680.5L724.5 672.3L728.0 672.3Z" fill="#1f62b0"/><path d="M726.2 697.5L728.0 705.7L724.5 705.7Z" fill="#1f62b0"/><text x="716.0" y="694.2" font-size="14.40" fill="#1d55a4" text-anchor="start" font-family="'DejaVu Sans Light','Liberation Sans',sans-serif" font-weight="200" font-style="italic" stroke="#1d55a4" stroke-width="0.28" textLength="6.5" lengthAdjust="spacingAndGlyphs" transform="rotate(-90 719.3 689.0)">8</text>
<path d="M658.5 689.0 L658.5 740.0" fill="none" stroke="#2a72b8" stroke-width="0.9" /><path d="M702.5 697.5 L702.5 740.0" fill="none" stroke="#2a72b8" stroke-width="0.9" /><path d="M658.5 737.5 L702.5 737.5" fill="none" stroke="#2a72b8" stroke-width="0.9" /><path d="M658.5 737.5L666.7 735.8L666.7 739.2Z" fill="#1f62b0"/><path d="M702.5 737.5L694.3 739.2L694.3 735.8Z" fill="#1f62b0"/><text x="673.7" y="735.0" font-size="14.40" fill="#1d55a4" text-anchor="start" font-family="'DejaVu Sans Light','Liberation Sans',sans-serif" font-weight="200" font-style="italic" stroke="#1d55a4" stroke-width="0.28" textLength="14.0" lengthAdjust="spacingAndGlyphs">21</text>
<path d="M803.9 680.5H811.2V697.5H803.7A26.4 26.4 0 1 0 803.9 680.5Z" fill="url(#hat)" stroke="#262626" stroke-width="1"/>
<path d="M804.5 680.5 L811.2 680.5" fill="none" stroke="#262626" stroke-width="1" /><path d="M804.5 697.5 L811.2 697.5" fill="none" stroke="#262626" stroke-width="1" />
<path d="M792.5 689.2 L865.0 689.2" fill="none" stroke="#e8262c" stroke-width="0.9" /><path d="M828.8 652.0 L828.8 722.5" fill="none" stroke="#e8262c" stroke-width="0.9" />
<path d="M788.3 680.5 L811.2 680.5" fill="none" stroke="#2a72b8" stroke-width="0.9" /><path d="M788.3 697.5 L811.2 697.5" fill="none" stroke="#2a72b8" stroke-width="0.9" /><path d="M790.5 660.0 L790.5 718.3" fill="none" stroke="#2a72b8" stroke-width="0.9" /><path d="M790.5 680.5L788.8 672.3L792.2 672.3Z" fill="#1f62b0"/><path d="M790.5 697.5L792.2 705.7L788.8 705.7Z" fill="#1f62b0"/><text x="780.2" y="694.2" font-size="14.40" fill="#1d55a4" text-anchor="start" font-family="'DejaVu Sans Light','Liberation Sans',sans-serif" font-weight="200" font-style="italic" stroke="#1d55a4" stroke-width="0.28" textLength="6.5" lengthAdjust="spacingAndGlyphs" transform="rotate(-90 783.5 689.0)">8</text>
<path d="M811.2 697.5 L811.2 740.0" fill="none" stroke="#2a72b8" stroke-width="0.9" /><path d="M855.2 689.0 L855.2 740.0" fill="none" stroke="#2a72b8" stroke-width="0.9" /><path d="M811.2 737.5 L855.2 737.5" fill="none" stroke="#2a72b8" stroke-width="0.9" /><path d="M811.2 737.5L819.4 735.8L819.4 739.2Z" fill="#1f62b0"/><path d="M855.2 737.5L847.0 739.2L847.0 735.8Z" fill="#1f62b0"/><text x="826.5" y="735.0" font-size="14.40" fill="#1d55a4" text-anchor="start" font-family="'DejaVu Sans Light','Liberation Sans',sans-serif" font-weight="200" font-style="italic" stroke="#1d55a4" stroke-width="0.28" textLength="14.0" lengthAdjust="spacingAndGlyphs">21</text>
<text x="1006.5" y="529.6" font-size="13.72" fill="#2e2ed0" text-anchor="start" font-family="'DejaVu Sans Light','Liberation Sans',sans-serif" font-weight="200" font-style="italic" stroke="#2e2ed0" stroke-width="0.28" textLength="6.0" lengthAdjust="spacingAndGlyphs">1</text>
<text x="1025.8" y="529.6" font-size="13.72" fill="#2e2ed0" text-anchor="start" font-family="'DejaVu Sans Light','Liberation Sans',sans-serif" font-weight="200" font-style="italic" stroke="#2e2ed0" stroke-width="0.28" textLength="325.2" lengthAdjust="spacingAndGlyphs">Неуказанные предельные отклонения размеров</text>
<text x="1006.5" y="560.7" font-size="13.72" fill="#2e2ed0" text-anchor="start" font-family="'DejaVu Sans Light','Liberation Sans',sans-serif" font-weight="200" font-style="italic" stroke="#2e2ed0" stroke-width="0.28" textLength="6.0" lengthAdjust="spacingAndGlyphs">2</text>
<text x="1025.8" y="560.7" font-size="13.72" fill="#2e2ed0" text-anchor="start" font-family="'DejaVu Sans Light','Liberation Sans',sans-serif" font-weight="200" font-style="italic" stroke="#2e2ed0" stroke-width="0.28" textLength="269.2" lengthAdjust="spacingAndGlyphs">Неуказанные радиусы скруглений R 0,5.</text>
<text x="1006.5" y="576.3" font-size="13.72" fill="#2e2ed0" text-anchor="start" font-family="'DejaVu Sans Light','Liberation Sans',sans-serif" font-weight="200" font-style="italic" stroke="#2e2ed0" stroke-width="0.28" textLength="6.0" lengthAdjust="spacingAndGlyphs">3</text>
<text x="1025.8" y="576.3" font-size="13.72" fill="#2e2ed0" text-anchor="start" font-family="'DejaVu Sans Light','Liberation Sans',sans-serif" font-weight="200" font-style="italic" stroke="#2e2ed0" stroke-width="0.28" textLength="178.2" lengthAdjust="spacingAndGlyphs">Неуказанные фаски 1x45°.</text>
<text x="1006.5" y="591.8" font-size="13.72" fill="#2e2ed0" text-anchor="start" font-family="'DejaVu Sans Light','Liberation Sans',sans-serif" font-weight="200" font-style="italic" stroke="#2e2ed0" stroke-width="0.28" textLength="6.0" lengthAdjust="spacingAndGlyphs">4</text>
<text x="1025.8" y="591.8" font-size="13.72" fill="#2e2ed0" text-anchor="start" font-family="'DejaVu Sans Light','Liberation Sans',sans-serif" font-weight="200" font-style="italic" stroke="#2e2ed0" stroke-width="0.28" textLength="79.8" lengthAdjust="spacingAndGlyphs">40 .45 HRCэ</text>
<text x="1006.5" y="607.4" font-size="13.72" fill="#2e2ed0" text-anchor="start" font-family="'DejaVu Sans Light','Liberation Sans',sans-serif" font-weight="200" font-style="italic" stroke="#2e2ed0" stroke-width="0.28" textLength="6.0" lengthAdjust="spacingAndGlyphs">5</text>
<text x="1025.8" y="607.4" font-size="13.72" fill="#2e2ed0" text-anchor="start" font-family="'DejaVu Sans Light','Liberation Sans',sans-serif" font-weight="200" font-style="italic" stroke="#2e2ed0" stroke-width="0.28" textLength="123.7" lengthAdjust="spacingAndGlyphs">Н14; h14; ±(IT14/2).</text>
<text x="1006.5" y="623.4" font-size="13.72" fill="#2e2ed0" text-anchor="start" font-family="'DejaVu Sans Light','Liberation Sans',sans-serif" font-weight="200" font-style="italic" stroke="#2e2ed0" stroke-width="0.28" textLength="6.0" lengthAdjust="spacingAndGlyphs">6</text>
<text x="1025.8" y="623.4" font-size="13.72" fill="#2e2ed0" text-anchor="start" font-family="'DejaVu Sans Light','Liberation Sans',sans-serif" font-weight="200" font-style="italic" stroke="#2e2ed0" stroke-width="0.28" textLength="152.8" lengthAdjust="spacingAndGlyphs">Покрытие:Хим Окс прм.</text>
<text x="985.9" y="544.8" font-size="13.72" fill="#2e2ed0" text-anchor="start" font-family="'DejaVu Sans Light','Liberation Sans',sans-serif" font-weight="200" font-style="italic" stroke="#2e2ed0" stroke-width="0.28" textLength="46.7" lengthAdjust="spacingAndGlyphs">±0 1 мм.</text>
<rect x="967.5" y="631" width="1.2" height="1.2" fill="#8aa0d0"/>
<path d="M1298.0 596.4 L1375.0 596.4" fill="none" stroke="#1a1a1a" stroke-width="0.9" /><path d="M1335.8 557.7 L1335.8 634.7" fill="none" stroke="#1a1a1a" stroke-width="0.9" /><rect x="1332.3" y="592.9" width="7" height="7" fill="none" stroke="#1a1a1a" stroke-width="0.9"/>
<path d="M991.3 645.3 L1378.5 645.3" fill="none" stroke="#262626" stroke-width="1.1" />
<path d="M991.3 645.3 L991.3 759.8" fill="none" stroke="#262626" stroke-width="1.1" />
<path d="M1026.7 645.3 L1026.7 759.8" fill="none" stroke="#262626" stroke-width="1.1" />
<path d="M1075.0 645.3 L1075.0 759.8" fill="none" stroke="#262626" stroke-width="1.1" />
<path d="M1106.7 645.3 L1106.7 759.8" fill="none" stroke="#262626" stroke-width="1.1" />
<path d="M1127.5 645.3 L1127.5 759.8" fill="none" stroke="#262626" stroke-width="1.1" />
<path d="M1005.8 645.3 L1005.8 697.5" fill="none" stroke="#262626" stroke-width="1.1" />
<path d="M991.3 655.5 L1127.5 655.5" fill="none" stroke="#e8262c" stroke-width="0.9" />
<path d="M991.3 665.8 L1127.5 665.8" fill="none" stroke="#e8262c" stroke-width="0.9" />
<path d="M991.3 676.3 L1127.5 676.3" fill="none" stroke="#e8262c" stroke-width="0.9" />
<path d="M991.3 708.0 L1127.5 708.0" fill="none" stroke="#e8262c" stroke-width="0.9" />
<path d="M991.3 718.3 L1127.5 718.3" fill="none" stroke="#e8262c" stroke-width="0.9" />
<path d="M991.3 728.8 L1127.5 728.8" fill="none" stroke="#e8262c" stroke-width="0.9" />
<path d="M991.3 739.5 L1127.5 739.5" fill="none" stroke="#e8262c" stroke-width="0.9" />
<path d="M991.3 749.7 L1127.5 749.7" fill="none" stroke="#e8262c" stroke-width="0.9" />
<path d="M991.3 687.2 L1127.5 687.2" fill="none" stroke="#262626" stroke-width="1.1" /><path d="M991.3 697.5 L1127.5 697.5" fill="none" stroke="#262626" stroke-width="1.1" />
<path d="M1127.5 675.8 L1378.5 675.8" fill="none" stroke="#262626" stroke-width="1.1" /><path d="M1127.5 728.8 L1378.5 728.8" fill="none" stroke="#262626" stroke-width="1.1" /><path d="M1273.3 675.8 L1273.3 759.8" fill="none" stroke="#262626" stroke-width="1.1" />
<path d="M1273.3 687.2 L1378.5 687.2" fill="none" stroke="#262626" stroke-width="1.1" /><path d="M1273.3 718.3 L1378.5 718.3" fill="none" stroke="#262626" stroke-width="1.1" /><path d="M1305.5 675.8 L1305.5 718.3" fill="none" stroke="#262626" stroke-width="1.1" /><path d="M1340.8 675.8 L1340.8 718.3" fill="none" stroke="#262626" stroke-width="1.1" /><path d="M1315.3 718.3 L1315.3 728.8" fill="none" stroke="#262626" stroke-width="1.1" />
<path d="M1284.5 687.2 L1284.5 718.3" fill="none" stroke="#e8262c" stroke-width="0.9" /><path d="M1294.7 687.2 L1294.7 718.3" fill="none" stroke="#e8262c" stroke-width="0.9" />
<text x="1198.3" y="667.7" font-size="18.93" fill="#e8262c" text-anchor="start" font-family="'DejaVu Sans Light','Liberation Sans',sans-serif" font-weight="200" font-style="italic" stroke="#e8262c" stroke-width="0.28" textLength="113.0" lengthAdjust="spacingAndGlyphs">ННСТ 029 00</text>
<text x="1148.0" y="710.5" font-size="19.89" fill="#e8262c" text-anchor="start" font-family="'DejaVu Sans Light','Liberation Sans',sans-serif" font-weight="200" font-style="italic" stroke="#e8262c" stroke-width="0.1" textLength="105.7" lengthAdjust="spacingAndGlyphs">Вал насоса</text>
<text x="1135.8" y="750.5" font-size="14.40" fill="#e8262c" text-anchor="start" font-family="'DejaVu Sans Light','Liberation Sans',sans-serif" font-weight="200" font-style="italic" stroke="#e8262c" stroke-width="0.28" textLength="30.0" lengthAdjust="spacingAndGlyphs">Круг</text>
<path d="M1172.8 744.7 L1262.5 744.7" fill="none" stroke="#e8262c" stroke-width="0.9" /><text x="1177.0" y="743.0" font-size="9.50" fill="#e8262c" text-anchor="start" font-family="'Liberation Sans',sans-serif" font-style="italic" textLength="80.5" lengthAdjust="spacingAndGlyphs">44 ГОСТ 2590-88</text><text x="1174.2" y="753.6" font-size="9.50" fill="#e8262c" text-anchor="start" font-family="'Liberation Sans',sans-serif" font-style="italic" textLength="86.6" lengthAdjust="spacingAndGlyphs">40Х ГОСТ 4543-71</text>
<text x="1293.0" y="750.3" font-size="15.09" fill="#e8262c" text-anchor="start" font-family="'DejaVu Sans Light','Liberation Sans',sans-serif" font-weight="200" font-style="italic" stroke="#e8262c" stroke-width="0.28" textLength="69.5" lengthAdjust="spacingAndGlyphs">ЗАО "ООО"</text>
<text x="1282.5" y="685.0" font-size="7.82" fill="#e8262c" text-anchor="start" font-family="'Liberation Sans',sans-serif" font-style="italic" textLength="14.2" lengthAdjust="spacingAndGlyphs">Лит.</text><text x="1313.3" y="685.0" font-size="7.82" fill="#e8262c" text-anchor="start" font-family="'Liberation Sans',sans-serif" font-style="italic" textLength="20.0" lengthAdjust="spacingAndGlyphs">Масса</text><text x="1344.7" y="685.0" font-size="7.82" fill="#e8262c" text-anchor="start" font-family="'Liberation Sans',sans-serif" font-style="italic" textLength="31.6" lengthAdjust="spacingAndGlyphs">Масштаб</text>
<text x="1311.7" y="708.0" font-size="15.09" fill="#e8262c" text-anchor="start" font-family="'DejaVu Sans Light','Liberation Sans',sans-serif" font-weight="200" font-style="italic" stroke="#e8262c" stroke-width="0.28" textLength="25.8" lengthAdjust="spacingAndGlyphs">3 03</text><text x="1355.8" y="708.0" font-size="15.09" fill="#e8262c" text-anchor="start" font-family="'DejaVu Sans Light','Liberation Sans',sans-serif" font-weight="200" font-style="italic" stroke="#e8262c" stroke-width="0.28" textLength="12.5" lengthAdjust="spacingAndGlyphs">1 1</text>
<text x="1277.5" y="726.6" font-size="7.82" fill="#e8262c" text-anchor="start" font-family="'Liberation Sans',sans-serif" font-style="italic" textLength="16.7" lengthAdjust="spacingAndGlyphs">Лист</text><text x="1321.2" y="726.6" font-size="7.82" fill="#e8262c" text-anchor="start" font-family="'Liberation Sans',sans-serif" font-style="italic" textLength="32.5" lengthAdjust="spacingAndGlyphs">Листов  1</text>
<text x="992.0" y="695.8" font-size="7.82" fill="#e8262c" text-anchor="start" font-family="'Liberation Sans',sans-serif" font-style="italic" textLength="11.0" lengthAdjust="spacingAndGlyphs">Изм</text><text x="1008.0" y="695.8" font-size="7.82" fill="#e8262c" text-anchor="start" font-family="'Liberation Sans',sans-serif" font-style="italic" textLength="17.0" lengthAdjust="spacingAndGlyphs">Лист</text><text x="1036.6" y="695.8" font-size="7.82" fill="#e8262c" text-anchor="start" font-family="'Liberation Sans',sans-serif" font-style="italic" textLength="29.3" lengthAdjust="spacingAndGlyphs">№ докум.</text><text x="1082.0" y="695.8" font-size="7.82" fill="#e8262c" text-anchor="start" font-family="'Liberation Sans',sans-serif" font-style="italic" textLength="16.0" lengthAdjust="spacingAndGlyphs">Подп</text><text x="1108.0" y="695.8" font-size="7.82" fill="#e8262c" text-anchor="start" font-family="'Liberation Sans',sans-serif" font-style="italic" textLength="18.0" lengthAdjust="spacingAndGlyphs">Дата</text>
<text x="992.3" y="705.8" font-size="7.82" fill="#e8262c" text-anchor="start" font-family="'Liberation Sans',sans-serif" font-style="italic" textLength="24.7" lengthAdjust="spacingAndGlyphs">Разраб</text><text x="1028.0" y="705.8" font-size="7.82" fill="#e8262c" text-anchor="start" font-family="'Liberation Sans',sans-serif" font-style="italic" textLength="23.7" lengthAdjust="spacingAndGlyphs">Иванов</text>
<text x="1108.0" y="705.8" font-size="7.82" fill="#e8262c" text-anchor="start" font-family="'Liberation Sans',sans-serif" font-style="italic" font-weight="bold" textLength="18.7" lengthAdjust="spacingAndGlyphs">08.10.08</text>
<text x="992.3" y="716.1" font-size="7.82" fill="#e8262c" text-anchor="start" font-family="'Liberation Sans',sans-serif" font-style="italic" textLength="15.5" lengthAdjust="spacingAndGlyphs">Пров</text><text x="1028.0" y="716.1" font-size="7.82" fill="#e8262c" text-anchor="start" font-family="'Liberation Sans',sans-serif" font-style="italic" textLength="24.5" lengthAdjust="spacingAndGlyphs">Петров</text>
<text x="1108.0" y="716.1" font-size="7.82" fill="#e8262c" text-anchor="start" font-family="'Liberation Sans',sans-serif" font-style="italic" font-weight="bold" textLength="18.7" lengthAdjust="spacingAndGlyphs">08.10.08</text>
<text x="992.3" y="726.6" font-size="7.82" fill="#e8262c" text-anchor="start" font-family="'Liberation Sans',sans-serif" font-style="italic" textLength="28.3" lengthAdjust="spacingAndGlyphs">Т контр</text><text x="1028.0" y="726.6" font-size="7.82" fill="#e8262c" text-anchor="start" font-family="'Liberation Sans',sans-serif" font-style="italic" textLength="25.3" lengthAdjust="spacingAndGlyphs">Сидоров</text>
<text x="1108.0" y="726.6" font-size="7.82" fill="#e8262c" text-anchor="start" font-family="'Liberation Sans',sans-serif" font-style="italic" font-weight="bold" textLength="18.7" lengthAdjust="spacingAndGlyphs">08.10.08</text>
<text x="992.3" y="747.8" font-size="7.82" fill="#e8262c" text-anchor="start" font-family="'Liberation Sans',sans-serif" font-style="italic" textLength="28.3" lengthAdjust="spacingAndGlyphs">Н контр</text><text x="1028.0" y="747.8" font-size="7.82" fill="#e8262c" text-anchor="start" font-family="'Liberation Sans',sans-serif" font-style="italic" textLength="25.3" lengthAdjust="spacingAndGlyphs">Сидоров</text>
<text x="1108.0" y="747.8" font-size="7.82" fill="#e8262c" text-anchor="start" font-family="'Liberation Sans',sans-serif" font-style="italic" font-weight="bold" textLength="18.7" lengthAdjust="spacingAndGlyphs">08.10.08</text>
<text x="992.3" y="758.1" font-size="7.82" fill="#e8262c" text-anchor="start" font-family="'Liberation Sans',sans-serif" font-style="italic" textLength="13.0" lengthAdjust="spacingAndGlyphs">Утв</text><text x="1028.0" y="758.1" font-size="7.82" fill="#e8262c" text-anchor="start" font-family="'Liberation Sans',sans-serif" font-style="italic" textLength="26.0" lengthAdjust="spacingAndGlyphs">Смирнов</text>
<text x="1108.0" y="758.1" font-size="7.82" fill="#e8262c" text-anchor="start" font-family="'Liberation Sans',sans-serif" font-style="italic" font-weight="bold" textLength="18.7" lengthAdjust="spacingAndGlyphs">08.10.08</text>
<text x="1170.0" y="768.2" font-size="7.82" fill="#e8262c" text-anchor="middle" font-family="'Liberation Sans',sans-serif" font-style="italic">1</text><text x="1187.5" y="768.2" font-size="7.82" fill="#e8262c" text-anchor="start" font-family="'Liberation Sans',sans-serif" font-style="italic" textLength="35.3" lengthAdjust="spacingAndGlyphs">Копировал</text><text x="1298.3" y="768.2" font-size="7.82" fill="#e8262c" text-anchor="start" font-family="'Liberation Sans',sans-serif" font-style="italic" textLength="26.4" lengthAdjust="spacingAndGlyphs">Формат</text><text x="1349.7" y="768.2" font-size="7.82" fill="#e8262c" text-anchor="start" font-family="'Liberation Sans',sans-serif" font-style="italic" textLength="7.8" lengthAdjust="spacingAndGlyphs">А3</text>
</svg>
</body></html>
